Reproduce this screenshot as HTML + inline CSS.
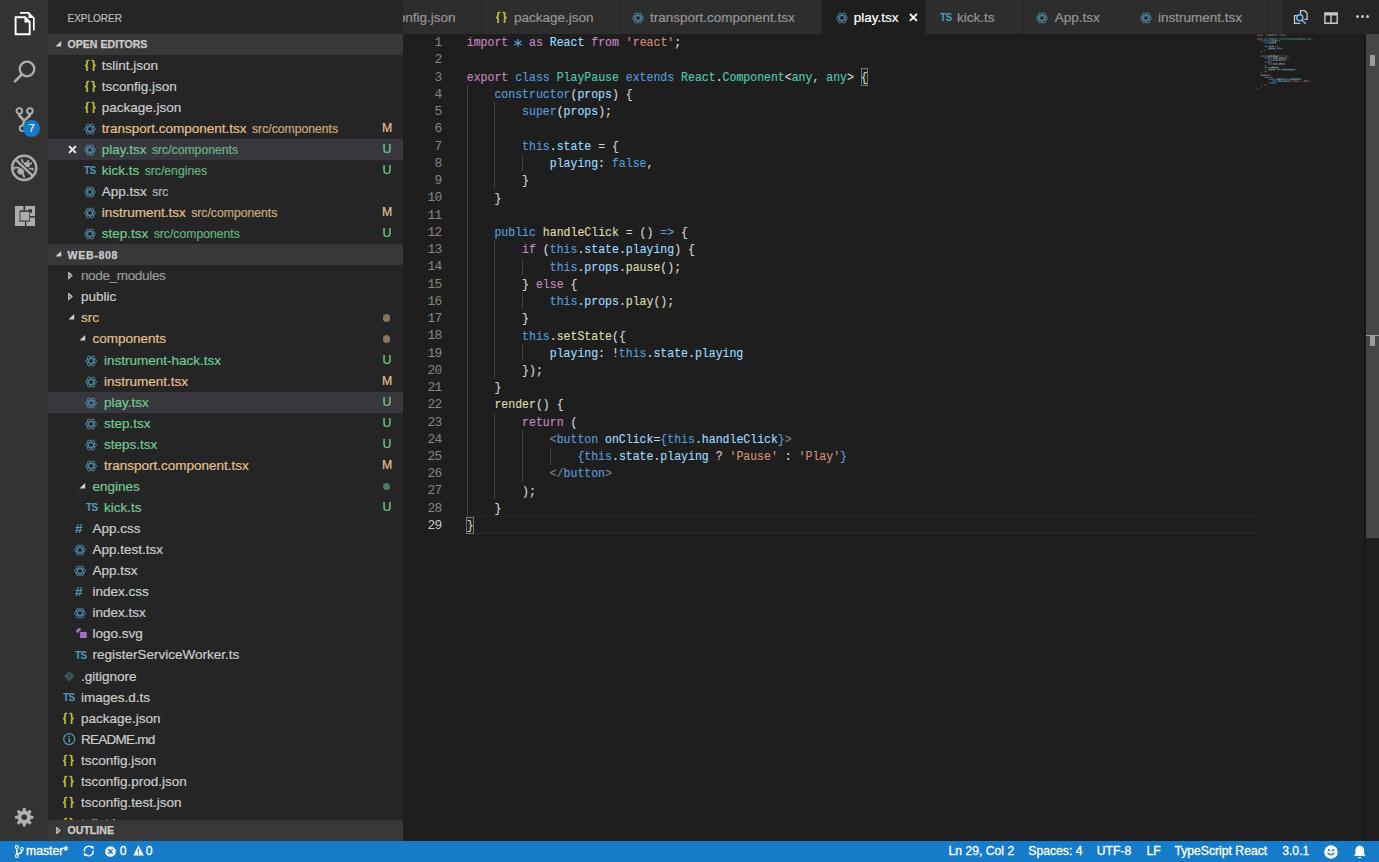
<!DOCTYPE html><html><head><meta charset="utf-8"><style>
*{box-sizing:border-box;margin:0;padding:0}
html,body{width:1379px;height:862px;overflow:hidden;background:#1e1e1e}
body{position:relative;font-family:"Liberation Sans",sans-serif}
.a{position:absolute}
.ui{font-family:"Liberation Sans",sans-serif;white-space:pre}
.code{position:absolute;font-family:"Liberation Mono",monospace;font-size:11.53px;white-space:pre;line-height:17.24px;height:17.24px;color:#D4D4D4}
.code span{-webkit-text-stroke:0.15px currentColor}.mm span{-webkit-text-stroke:1.2px currentColor}.k{color:#C586C0}.b{color:#569CD6}.v{color:#9CDCFE}.s{color:#CE9178}.t{color:#4EC9B0}.f{color:#DCDCAA}.g{color:#808080}
.row{position:absolute;left:48px;width:355px;height:21.07px;overflow:hidden}
.lbl{position:absolute;top:0;font-size:13.5px;line-height:21.07px;white-space:pre;-webkit-text-stroke:0.2px currentColor}
.desc{font-size:12.2px;opacity:.85;margin-left:5.5px}
.bdg{position:absolute;left:335.5px;top:0;width:10px;text-align:center;font-size:11.5px;line-height:21.07px;font-weight:bold}
.hdr{position:absolute;left:48px;width:355px;background:#383838}
.hdrt{position:absolute;left:19.7px;font-size:10.5px;font-weight:bold;color:#cccccc;white-space:pre}
</style></head><body>
<div class="a" style="left:0;top:0;width:48px;height:841px;background:#333333"></div>
<div class="a" style="left:48px;top:0;width:355px;height:841px;background:#252526"></div>
<div class="a ui" style="left:67.5px;top:12.8px;font-size:10px;line-height:12px;color:#bbbbbb;-webkit-text-stroke:0.2px #bbbbbb">EXPLORER</div>
<div class="hdr" style="top:33.50px;height:21.07px"></div>
<svg class="a" style="left:55.20px;top:40.70px" width="7" height="6" viewBox="0 0 7 6"><path d="M6.2 0 L6.2 5.6 L0.4 5.6 Z" fill="#d0d0d0"/></svg>
<div class="a ui" style="left:67.5px;top:37.90px;font-size:10.6px;line-height:12px;font-weight:bold;color:#cccccc;-webkit-text-stroke:0.25px #cccccc;letter-spacing:0px">OPEN EDITORS</div>
<svg class="a" style="left:84.50px;top:58.92px" width="12" height="12" viewBox="0 0 12 12"><text x="0" y="9.6" font-family="Liberation Sans" font-size="12" fill="#CBCB41" stroke="#CBCB41" stroke-width="0.45">{</text><text x="6.6" y="9.6" font-family="Liberation Sans" font-size="12" fill="#CBCB41" stroke="#CBCB41" stroke-width="0.45">}</text></svg>
<div class="a lbl" style="left:101.7px;top:54.59px;color:#cccccc">tslint.json</div>
<svg class="a" style="left:84.50px;top:79.99px" width="12" height="12" viewBox="0 0 12 12"><text x="0" y="9.6" font-family="Liberation Sans" font-size="12" fill="#CBCB41" stroke="#CBCB41" stroke-width="0.45">{</text><text x="6.6" y="9.6" font-family="Liberation Sans" font-size="12" fill="#CBCB41" stroke="#CBCB41" stroke-width="0.45">}</text></svg>
<div class="a lbl" style="left:101.7px;top:75.65px;color:#cccccc">tsconfig.json</div>
<svg class="a" style="left:84.50px;top:101.06px" width="12" height="12" viewBox="0 0 12 12"><text x="0" y="9.6" font-family="Liberation Sans" font-size="12" fill="#CBCB41" stroke="#CBCB41" stroke-width="0.45">{</text><text x="6.6" y="9.6" font-family="Liberation Sans" font-size="12" fill="#CBCB41" stroke="#CBCB41" stroke-width="0.45">}</text></svg>
<div class="a lbl" style="left:101.7px;top:96.72px;color:#cccccc">package.json</div>
<svg class="a" style="left:83.90px;top:122.82px" width="12" height="12" viewBox="0 0 12 12"><g fill="none" stroke="#4f95b5" stroke-width="0.85" transform="translate(6.0,6.0)"><ellipse rx="5.5" ry="2.4"/><ellipse rx="5.5" ry="2.4" transform="rotate(60)"/><ellipse rx="5.5" ry="2.4" transform="rotate(120)"/></g></svg>
<div class="a lbl" style="left:101.7px;top:117.79px;color:#E2C08D">transport.component.tsx<span class="desc">src/components</span></div>
<div class="a ui" style="left:381.5px;top:117.79px;width:11px;text-align:center;font-size:12.3px;line-height:21.07px;font-weight:normal;-webkit-text-stroke:0.2px #E2C08D;color:#E2C08D">M</div>
<div class="a" style="left:48px;top:138.86px;width:355px;height:21.07px;background:#37373d"></div>
<svg class="a" style="left:68.1px;top:145.16px" width="9" height="9" viewBox="0 0 9 9"><path d="M1.1 1.1 L7.9 7.9 M7.9 1.1 L1.1 7.9" stroke="#f0f0f0" stroke-width="2.0"/></svg>
<svg class="a" style="left:83.90px;top:143.89px" width="12" height="12" viewBox="0 0 12 12"><g fill="none" stroke="#4f95b5" stroke-width="0.85" transform="translate(6.0,6.0)"><ellipse rx="5.5" ry="2.4"/><ellipse rx="5.5" ry="2.4" transform="rotate(60)"/><ellipse rx="5.5" ry="2.4" transform="rotate(120)"/></g></svg>
<div class="a lbl" style="left:101.7px;top:138.86px;color:#73C991">play.tsx<span class="desc">src/components</span></div>
<div class="a ui" style="left:381.5px;top:138.86px;width:11px;text-align:center;font-size:12.3px;line-height:21.07px;font-weight:normal;-webkit-text-stroke:0.2px #73C991;color:#73C991">U</div>
<svg class="a" style="left:84.40px;top:165.26px" width="14" height="12" viewBox="0 0 14 12"><text x="0" y="8.6" font-family="Liberation Sans" font-weight="bold" font-size="10" letter-spacing="-0.7" fill="#519ABA">TS</text></svg>
<div class="a lbl" style="left:101.7px;top:159.93px;color:#73C991">kick.ts<span class="desc">src/engines</span></div>
<div class="a ui" style="left:381.5px;top:159.93px;width:11px;text-align:center;font-size:12.3px;line-height:21.07px;font-weight:normal;-webkit-text-stroke:0.2px #73C991;color:#73C991">U</div>
<svg class="a" style="left:83.90px;top:186.03px" width="12" height="12" viewBox="0 0 12 12"><g fill="none" stroke="#4f95b5" stroke-width="0.85" transform="translate(6.0,6.0)"><ellipse rx="5.5" ry="2.4"/><ellipse rx="5.5" ry="2.4" transform="rotate(60)"/><ellipse rx="5.5" ry="2.4" transform="rotate(120)"/></g></svg>
<div class="a lbl" style="left:101.7px;top:180.99px;color:#cccccc">App.tsx<span class="desc">src</span></div>
<svg class="a" style="left:83.90px;top:207.09px" width="12" height="12" viewBox="0 0 12 12"><g fill="none" stroke="#4f95b5" stroke-width="0.85" transform="translate(6.0,6.0)"><ellipse rx="5.5" ry="2.4"/><ellipse rx="5.5" ry="2.4" transform="rotate(60)"/><ellipse rx="5.5" ry="2.4" transform="rotate(120)"/></g></svg>
<div class="a lbl" style="left:101.7px;top:202.06px;color:#E2C08D">instrument.tsx<span class="desc">src/components</span></div>
<div class="a ui" style="left:381.5px;top:202.06px;width:11px;text-align:center;font-size:12.3px;line-height:21.07px;font-weight:normal;-webkit-text-stroke:0.2px #E2C08D;color:#E2C08D">M</div>
<svg class="a" style="left:83.90px;top:228.16px" width="12" height="12" viewBox="0 0 12 12"><g fill="none" stroke="#4f95b5" stroke-width="0.85" transform="translate(6.0,6.0)"><ellipse rx="5.5" ry="2.4"/><ellipse rx="5.5" ry="2.4" transform="rotate(60)"/><ellipse rx="5.5" ry="2.4" transform="rotate(120)"/></g></svg>
<div class="a lbl" style="left:101.7px;top:223.13px;color:#73C991">step.tsx<span class="desc">src/components</span></div>
<div class="a ui" style="left:381.5px;top:223.13px;width:11px;text-align:center;font-size:12.3px;line-height:21.07px;font-weight:normal;-webkit-text-stroke:0.2px #73C991;color:#73C991">U</div>
<div class="hdr" style="top:244.20px;height:21.07px"></div>
<svg class="a" style="left:55.20px;top:251.40px" width="7" height="6" viewBox="0 0 7 6"><path d="M6.2 0 L6.2 5.6 L0.4 5.6 Z" fill="#d0d0d0"/></svg>
<div class="a ui" style="left:67.5px;top:248.60px;font-size:10.6px;line-height:12px;font-weight:bold;color:#cccccc;-webkit-text-stroke:0.25px #cccccc;letter-spacing:0.68px">WEB-808</div>
<svg class="a" style="left:68.00px;top:272.26px" width="6" height="7.5" viewBox="0 0 6 7.5"><path d="M0.8 0.8 L3.9 3.6 L0.8 6.4 Z" fill="none" stroke="#c8c8c8" stroke-width="1.3"/></svg>
<div class="a lbl" style="left:80.9px;top:265.26px;color:#9a9a9a"><span style="letter-spacing:-0.33px">node_modules</span></div>
<svg class="a" style="left:68.00px;top:293.33px" width="6" height="7.5" viewBox="0 0 6 7.5"><path d="M0.8 0.8 L3.9 3.6 L0.8 6.4 Z" fill="none" stroke="#c8c8c8" stroke-width="1.3"/></svg>
<div class="a lbl" style="left:80.9px;top:286.33px;color:#cccccc">public</div>
<svg class="a" style="left:67.60px;top:314.00px" width="7" height="6" viewBox="0 0 7 6"><path d="M6.2 0 L6.2 5.6 L0.4 5.6 Z" fill="#d0d0d0"/></svg>
<div class="a lbl" style="left:80.9px;top:307.40px;color:#E2C08D">src</div>
<div class="a" style="left:382.7px;top:314.24px;width:7.4px;height:7.4px;border-radius:50%;background:#E2C08D;opacity:.52"></div>
<svg class="a" style="left:79.10px;top:335.07px" width="7" height="6" viewBox="0 0 7 6"><path d="M6.2 0 L6.2 5.6 L0.4 5.6 Z" fill="#d0d0d0"/></svg>
<div class="a lbl" style="left:92.4px;top:328.47px;color:#E2C08D">components</div>
<div class="a" style="left:382.7px;top:335.30px;width:7.4px;height:7.4px;border-radius:50%;background:#E2C08D;opacity:.52"></div>
<svg class="a" style="left:85.10px;top:354.57px" width="12" height="12" viewBox="0 0 12 12"><g fill="none" stroke="#4f95b5" stroke-width="0.85" transform="translate(6.0,6.0)"><ellipse rx="5.5" ry="2.4"/><ellipse rx="5.5" ry="2.4" transform="rotate(60)"/><ellipse rx="5.5" ry="2.4" transform="rotate(120)"/></g></svg>
<div class="a lbl" style="left:103.9px;top:349.54px;color:#73C991">instrument-hack.tsx</div>
<div class="a ui" style="left:381.5px;top:349.54px;width:11px;text-align:center;font-size:12.3px;line-height:21.07px;font-weight:normal;-webkit-text-stroke:0.2px #73C991;color:#73C991">U</div>
<svg class="a" style="left:85.10px;top:375.64px" width="12" height="12" viewBox="0 0 12 12"><g fill="none" stroke="#4f95b5" stroke-width="0.85" transform="translate(6.0,6.0)"><ellipse rx="5.5" ry="2.4"/><ellipse rx="5.5" ry="2.4" transform="rotate(60)"/><ellipse rx="5.5" ry="2.4" transform="rotate(120)"/></g></svg>
<div class="a lbl" style="left:103.9px;top:370.61px;color:#E2C08D">instrument.tsx</div>
<div class="a ui" style="left:381.5px;top:370.61px;width:11px;text-align:center;font-size:12.3px;line-height:21.07px;font-weight:normal;-webkit-text-stroke:0.2px #E2C08D;color:#E2C08D">M</div>
<div class="a" style="left:48px;top:391.67px;width:355px;height:21.07px;background:#37373d"></div>
<svg class="a" style="left:85.10px;top:396.71px" width="12" height="12" viewBox="0 0 12 12"><g fill="none" stroke="#4f95b5" stroke-width="0.85" transform="translate(6.0,6.0)"><ellipse rx="5.5" ry="2.4"/><ellipse rx="5.5" ry="2.4" transform="rotate(60)"/><ellipse rx="5.5" ry="2.4" transform="rotate(120)"/></g></svg>
<div class="a lbl" style="left:103.9px;top:391.67px;color:#73C991">play.tsx</div>
<div class="a ui" style="left:381.5px;top:391.67px;width:11px;text-align:center;font-size:12.3px;line-height:21.07px;font-weight:normal;-webkit-text-stroke:0.2px #73C991;color:#73C991">U</div>
<svg class="a" style="left:85.10px;top:417.77px" width="12" height="12" viewBox="0 0 12 12"><g fill="none" stroke="#4f95b5" stroke-width="0.85" transform="translate(6.0,6.0)"><ellipse rx="5.5" ry="2.4"/><ellipse rx="5.5" ry="2.4" transform="rotate(60)"/><ellipse rx="5.5" ry="2.4" transform="rotate(120)"/></g></svg>
<div class="a lbl" style="left:103.9px;top:412.74px;color:#73C991">step.tsx</div>
<div class="a ui" style="left:381.5px;top:412.74px;width:11px;text-align:center;font-size:12.3px;line-height:21.07px;font-weight:normal;-webkit-text-stroke:0.2px #73C991;color:#73C991">U</div>
<svg class="a" style="left:85.10px;top:438.84px" width="12" height="12" viewBox="0 0 12 12"><g fill="none" stroke="#4f95b5" stroke-width="0.85" transform="translate(6.0,6.0)"><ellipse rx="5.5" ry="2.4"/><ellipse rx="5.5" ry="2.4" transform="rotate(60)"/><ellipse rx="5.5" ry="2.4" transform="rotate(120)"/></g></svg>
<div class="a lbl" style="left:103.9px;top:433.81px;color:#73C991">steps.tsx</div>
<div class="a ui" style="left:381.5px;top:433.81px;width:11px;text-align:center;font-size:12.3px;line-height:21.07px;font-weight:normal;-webkit-text-stroke:0.2px #73C991;color:#73C991">U</div>
<svg class="a" style="left:85.10px;top:459.91px" width="12" height="12" viewBox="0 0 12 12"><g fill="none" stroke="#4f95b5" stroke-width="0.85" transform="translate(6.0,6.0)"><ellipse rx="5.5" ry="2.4"/><ellipse rx="5.5" ry="2.4" transform="rotate(60)"/><ellipse rx="5.5" ry="2.4" transform="rotate(120)"/></g></svg>
<div class="a lbl" style="left:103.9px;top:454.88px;color:#E2C08D">transport.component.tsx</div>
<div class="a ui" style="left:381.5px;top:454.88px;width:11px;text-align:center;font-size:12.3px;line-height:21.07px;font-weight:normal;-webkit-text-stroke:0.2px #E2C08D;color:#E2C08D">M</div>
<svg class="a" style="left:79.10px;top:482.55px" width="7" height="6" viewBox="0 0 7 6"><path d="M6.2 0 L6.2 5.6 L0.4 5.6 Z" fill="#d0d0d0"/></svg>
<div class="a lbl" style="left:92.4px;top:475.94px;color:#73C991">engines</div>
<div class="a" style="left:382.7px;top:482.78px;width:7.4px;height:7.4px;border-radius:50%;background:#73C991;opacity:.52"></div>
<svg class="a" style="left:86.10px;top:502.35px" width="14" height="12" viewBox="0 0 14 12"><text x="0" y="8.6" font-family="Liberation Sans" font-weight="bold" font-size="10" letter-spacing="-0.7" fill="#519ABA">TS</text></svg>
<div class="a lbl" style="left:103.9px;top:497.01px;color:#73C991">kick.ts</div>
<div class="a ui" style="left:381.5px;top:497.01px;width:11px;text-align:center;font-size:12.3px;line-height:21.07px;font-weight:normal;-webkit-text-stroke:0.2px #73C991;color:#73C991">U</div>
<svg class="a" style="left:75.30px;top:523.22px" width="10" height="12" viewBox="0 0 10 12"><text x="0" y="10.4" font-family="Liberation Sans" font-weight="bold" font-size="13.6" fill="#519ABA">#</text></svg>
<div class="a lbl" style="left:92.4px;top:518.08px;color:#cccccc">App.css</div>
<svg class="a" style="left:73.90px;top:544.18px" width="12" height="12" viewBox="0 0 12 12"><g fill="none" stroke="#4f95b5" stroke-width="0.85" transform="translate(6.0,6.0)"><ellipse rx="5.5" ry="2.4"/><ellipse rx="5.5" ry="2.4" transform="rotate(60)"/><ellipse rx="5.5" ry="2.4" transform="rotate(120)"/></g></svg>
<div class="a lbl" style="left:92.4px;top:539.15px;color:#cccccc">App.test.tsx</div>
<svg class="a" style="left:73.90px;top:565.25px" width="12" height="12" viewBox="0 0 12 12"><g fill="none" stroke="#4f95b5" stroke-width="0.85" transform="translate(6.0,6.0)"><ellipse rx="5.5" ry="2.4"/><ellipse rx="5.5" ry="2.4" transform="rotate(60)"/><ellipse rx="5.5" ry="2.4" transform="rotate(120)"/></g></svg>
<div class="a lbl" style="left:92.4px;top:560.22px;color:#cccccc">App.tsx</div>
<svg class="a" style="left:75.30px;top:586.42px" width="10" height="12" viewBox="0 0 10 12"><text x="0" y="10.4" font-family="Liberation Sans" font-weight="bold" font-size="13.6" fill="#519ABA">#</text></svg>
<div class="a lbl" style="left:92.4px;top:581.29px;color:#cccccc">index.css</div>
<svg class="a" style="left:73.90px;top:607.39px" width="12" height="12" viewBox="0 0 12 12"><g fill="none" stroke="#4f95b5" stroke-width="0.85" transform="translate(6.0,6.0)"><ellipse rx="5.5" ry="2.4"/><ellipse rx="5.5" ry="2.4" transform="rotate(60)"/><ellipse rx="5.5" ry="2.4" transform="rotate(120)"/></g></svg>
<div class="a lbl" style="left:92.4px;top:602.35px;color:#cccccc">index.tsx</div>
<svg class="a" style="left:74.60px;top:627.25px" width="13" height="13" viewBox="0 0 13 13"><path d="M1 5.6 A4.6 4.6 0 0 1 5.6 1 V5.6 Z" fill="#A074C4"/><rect x="4.6" y="4.4" width="7.6" height="7.2" fill="#A074C4" stroke="#252526" stroke-width="1"/></svg>
<div class="a lbl" style="left:92.4px;top:623.42px;color:#cccccc">logo.svg</div>
<svg class="a" style="left:74.60px;top:649.82px" width="14" height="12" viewBox="0 0 14 12"><text x="0" y="8.6" font-family="Liberation Sans" font-weight="bold" font-size="10" letter-spacing="-0.7" fill="#519ABA">TS</text></svg>
<div class="a lbl" style="left:92.4px;top:644.49px;color:#cccccc">registerServiceWorker.ts</div>
<svg class="a" style="left:63.50px;top:671.09px" width="11" height="11" viewBox="0 0 11 11"><path d="M5.2 0 L10.4 5.2 L5.2 10.4 L0 5.2 Z" fill="#41535B"/><path d="M4.2 3 L6.4 5.2 L4.2 7.4" stroke="#252526" stroke-width="1" fill="none"/><path d="M5.2 2.2 V8.2" stroke="#2f3d43" stroke-width="0.8"/></svg>
<div class="a lbl" style="left:80.9px;top:665.56px;color:#cccccc">.gitignore</div>
<svg class="a" style="left:63.10px;top:691.96px" width="14" height="12" viewBox="0 0 14 12"><text x="0" y="8.6" font-family="Liberation Sans" font-weight="bold" font-size="10" letter-spacing="-0.7" fill="#519ABA">TS</text></svg>
<div class="a lbl" style="left:80.9px;top:686.62px;color:#cccccc">images.d.ts</div>
<svg class="a" style="left:63.00px;top:712.03px" width="12" height="12" viewBox="0 0 12 12"><text x="0" y="9.6" font-family="Liberation Sans" font-size="12" fill="#CBCB41" stroke="#CBCB41" stroke-width="0.45">{</text><text x="6.6" y="9.6" font-family="Liberation Sans" font-size="12" fill="#CBCB41" stroke="#CBCB41" stroke-width="0.45">}</text></svg>
<div class="a lbl" style="left:80.9px;top:707.69px;color:#cccccc">package.json</div>
<svg class="a" style="left:62.70px;top:733.09px" width="13" height="13" viewBox="0 0 13 13"><circle cx="6.2" cy="6.1" r="5.5" fill="none" stroke="#519ABA" stroke-width="1.2"/><rect x="5.5" y="5" width="1.4" height="4.3" fill="#519ABA"/><rect x="5.5" y="2.8" width="1.4" height="1.3" fill="#519ABA"/></svg>
<div class="a lbl" style="left:80.9px;top:728.76px;color:#cccccc"><span style="letter-spacing:-0.75px">README.md</span></div>
<svg class="a" style="left:63.00px;top:754.16px" width="12" height="12" viewBox="0 0 12 12"><text x="0" y="9.6" font-family="Liberation Sans" font-size="12" fill="#CBCB41" stroke="#CBCB41" stroke-width="0.45">{</text><text x="6.6" y="9.6" font-family="Liberation Sans" font-size="12" fill="#CBCB41" stroke="#CBCB41" stroke-width="0.45">}</text></svg>
<div class="a lbl" style="left:80.9px;top:749.83px;color:#cccccc">tsconfig.json</div>
<svg class="a" style="left:63.00px;top:775.23px" width="12" height="12" viewBox="0 0 12 12"><text x="0" y="9.6" font-family="Liberation Sans" font-size="12" fill="#CBCB41" stroke="#CBCB41" stroke-width="0.45">{</text><text x="6.6" y="9.6" font-family="Liberation Sans" font-size="12" fill="#CBCB41" stroke="#CBCB41" stroke-width="0.45">}</text></svg>
<div class="a lbl" style="left:80.9px;top:770.90px;color:#cccccc">tsconfig.prod.json</div>
<svg class="a" style="left:63.00px;top:796.30px" width="12" height="12" viewBox="0 0 12 12"><text x="0" y="9.6" font-family="Liberation Sans" font-size="12" fill="#CBCB41" stroke="#CBCB41" stroke-width="0.45">{</text><text x="6.6" y="9.6" font-family="Liberation Sans" font-size="12" fill="#CBCB41" stroke="#CBCB41" stroke-width="0.45">}</text></svg>
<div class="a lbl" style="left:80.9px;top:791.97px;color:#cccccc">tsconfig.test.json</div>
<svg class="a" style="left:63.00px;top:817.37px" width="12" height="12" viewBox="0 0 12 12"><text x="0" y="9.6" font-family="Liberation Sans" font-size="12" fill="#CBCB41" stroke="#CBCB41" stroke-width="0.45">{</text><text x="6.6" y="9.6" font-family="Liberation Sans" font-size="12" fill="#CBCB41" stroke="#CBCB41" stroke-width="0.45">}</text></svg>
<div class="a lbl" style="left:80.9px;top:813.03px;color:#cccccc">tslint.json</div>
<div class="hdr" style="top:819.60px;height:21.07px"></div>
<svg class="a" style="left:55.50px;top:826.60px" width="6" height="7.5" viewBox="0 0 6 7.5"><path d="M0.8 0.8 L3.9 3.6 L0.8 6.4 Z" fill="none" stroke="#c8c8c8" stroke-width="1.3"/></svg>
<div class="a ui" style="left:67.5px;top:824.00px;font-size:10.6px;line-height:12px;font-weight:bold;color:#cccccc;-webkit-text-stroke:0.25px #cccccc;letter-spacing:0px">OUTLINE</div>
<div class="a" style="left:403px;top:0;width:976px;height:841px;background:#1e1e1e"></div>
<div class="a" style="left:403px;top:0;width:976px;height:33.5px;background:#252526"></div>
<div class="a" style="left:403px;top:0;width:880.5px;height:33.5px;overflow:hidden">
<div class="a" style="left:0.00px;top:0;width:78.15px;height:33.5px;background:#2d2d2d"></div>
<div class="a ui" style="left:-5.20px;top:9.2px;font-size:13.5px;line-height:17px;color:#969696;-webkit-text-stroke:0.2px #969696">onfig.json</div>
<div class="a" style="left:79.10px;top:0;width:136.65px;height:33.5px;background:#2d2d2d"></div>
<svg class="a" style="left:93.30px;top:10.80px" width="12" height="12" viewBox="0 0 12 12"><text x="0" y="9.6" font-family="Liberation Sans" font-size="12" fill="#CBCB41" stroke="#CBCB41" stroke-width="0.45">{</text><text x="6.6" y="9.6" font-family="Liberation Sans" font-size="12" fill="#CBCB41" stroke="#CBCB41" stroke-width="0.45">}</text></svg>
<div class="a ui" style="left:111.00px;top:9.2px;font-size:13.5px;line-height:17px;color:#969696;-webkit-text-stroke:0.2px #969696">package.json</div>
<div class="a" style="left:216.70px;top:0;width:201.25px;height:33.5px;background:#2d2d2d"></div>
<svg class="a" style="left:228.60px;top:11.50px" width="12" height="12" viewBox="0 0 12 12"><g fill="none" stroke="#4f95b5" stroke-width="0.85" transform="translate(6.0,6.0)"><ellipse rx="5.5" ry="2.4"/><ellipse rx="5.5" ry="2.4" transform="rotate(60)"/><ellipse rx="5.5" ry="2.4" transform="rotate(120)"/></g></svg>
<div class="a ui" style="left:246.90px;top:9.2px;font-size:13.5px;line-height:17px;color:#969696;-webkit-text-stroke:0.2px #969696">transport.component.tsx</div>
<div class="a" style="left:418.90px;top:0;width:102.65px;height:33.5px;background:#1e1e1e"></div>
<svg class="a" style="left:432.50px;top:11.50px" width="12" height="12" viewBox="0 0 12 12"><g fill="none" stroke="#4f95b5" stroke-width="0.85" transform="translate(6.0,6.0)"><ellipse rx="5.5" ry="2.4"/><ellipse rx="5.5" ry="2.4" transform="rotate(60)"/><ellipse rx="5.5" ry="2.4" transform="rotate(120)"/></g></svg>
<div class="a ui" style="left:450.80px;top:9.2px;font-size:13.5px;line-height:17px;color:#ffffff;-webkit-text-stroke:0.2px #ffffff">play.tsx</div>
<svg class="a" style="left:506.4px;top:13.3px" width="8.8" height="8.8" viewBox="0 0 8.8 8.8"><path d="M0.9 0.9 L7.9 7.9 M7.9 0.9 L0.9 7.9" stroke="#ffffff" stroke-width="1.9"/></svg>
<div class="a" style="left:522.50px;top:0;width:97.45px;height:33.5px;background:#2d2d2d"></div>
<svg class="a" style="left:537.20px;top:11.80px" width="14" height="12" viewBox="0 0 14 12"><text x="0" y="8.6" font-family="Liberation Sans" font-weight="bold" font-size="10" letter-spacing="-0.7" fill="#519ABA">TS</text></svg>
<div class="a ui" style="left:554.00px;top:9.2px;font-size:13.5px;line-height:17px;color:#969696;-webkit-text-stroke:0.2px #969696">kick.ts</div>
<div class="a" style="left:620.90px;top:0;width:101.55px;height:33.5px;background:#2d2d2d"></div>
<svg class="a" style="left:632.60px;top:11.50px" width="12" height="12" viewBox="0 0 12 12"><g fill="none" stroke="#4f95b5" stroke-width="0.85" transform="translate(6.0,6.0)"><ellipse rx="5.5" ry="2.4"/><ellipse rx="5.5" ry="2.4" transform="rotate(60)"/><ellipse rx="5.5" ry="2.4" transform="rotate(120)"/></g></svg>
<div class="a ui" style="left:651.80px;top:9.2px;font-size:13.5px;line-height:17px;color:#969696;-webkit-text-stroke:0.2px #969696">App.tsx</div>
<div class="a" style="left:723.40px;top:0;width:141.85px;height:33.5px;background:#2d2d2d"></div>
<svg class="a" style="left:736.50px;top:11.50px" width="12" height="12" viewBox="0 0 12 12"><g fill="none" stroke="#4f95b5" stroke-width="0.85" transform="translate(6.0,6.0)"><ellipse rx="5.5" ry="2.4"/><ellipse rx="5.5" ry="2.4" transform="rotate(60)"/><ellipse rx="5.5" ry="2.4" transform="rotate(120)"/></g></svg>
<div class="a ui" style="left:755.00px;top:9.2px;font-size:13.5px;line-height:17px;color:#969696;-webkit-text-stroke:0.2px #969696">instrument.tsx</div>
<div class="a" style="left:866.20px;top:0;width:13.35px;height:33.5px;background:#2d2d2d"></div>
</div>
<svg class="a" style="left:1288px;top:6px" width="24" height="22" viewBox="0 0 24 22"><g fill="none" stroke="#c5c5c5" stroke-width="1.3"><path d="M12.6 8 V4.7 H16.6 L19.1 7.3 V13.4 H16.5"/><path d="M8.8 9.7 H6.5 V17.3 H12.3"/></g><circle cx="11.8" cy="11.8" r="3.1" fill="none" stroke="#75beff" stroke-width="1.35"/><path d="M14 14 L17.4 17.4" stroke="#75beff" stroke-width="1.4" stroke-linecap="round"/></svg>
<svg class="a" style="left:1324px;top:11.5px" width="14.2" height="12.2" viewBox="0 0 14.2 12.2"><path d="M0.2 0.3 H13.9 V11.9 H0.2 Z M1.6 3.6 V10.5 H6.35 V3.6 Z M7.75 3.6 V10.5 H12.5 V3.6 Z" fill="#c8c8c8" fill-rule="evenodd"/></svg>
<div class="a" style="left:1356.00px;top:15.4px;width:3.1px;height:3.1px;border-radius:50%;background:#c5c5c5"></div>
<div class="a" style="left:1360.80px;top:15.4px;width:3.1px;height:3.1px;border-radius:50%;background:#c5c5c5"></div>
<div class="a" style="left:1365.60px;top:15.4px;width:3.1px;height:3.1px;border-radius:50%;background:#c5c5c5"></div>
<div class="a" style="left:466px;top:515.94px;width:791px;height:17.64px;border:1.5px solid #282828;border-right:none"></div>
<div class="a" style="left:466.80px;top:85.24px;width:1px;height:17.29px;background:#404040"></div>
<div class="a" style="left:466.80px;top:102.48px;width:1px;height:17.29px;background:#404040"></div>
<div class="a" style="left:494.47px;top:102.48px;width:1px;height:17.29px;background:#404040"></div>
<div class="a" style="left:466.80px;top:119.72px;width:1px;height:17.29px;background:#404040"></div>
<div class="a" style="left:494.47px;top:119.72px;width:1px;height:17.29px;background:#404040"></div>
<div class="a" style="left:466.80px;top:136.96px;width:1px;height:17.29px;background:#404040"></div>
<div class="a" style="left:494.47px;top:136.96px;width:1px;height:17.29px;background:#404040"></div>
<div class="a" style="left:466.80px;top:154.20px;width:1px;height:17.29px;background:#404040"></div>
<div class="a" style="left:494.47px;top:154.20px;width:1px;height:17.29px;background:#404040"></div>
<div class="a" style="left:522.14px;top:154.20px;width:1px;height:17.29px;background:#404040"></div>
<div class="a" style="left:466.80px;top:171.44px;width:1px;height:17.29px;background:#404040"></div>
<div class="a" style="left:494.47px;top:171.44px;width:1px;height:17.29px;background:#404040"></div>
<div class="a" style="left:466.80px;top:188.68px;width:1px;height:17.29px;background:#404040"></div>
<div class="a" style="left:466.80px;top:205.92px;width:1px;height:17.29px;background:#404040"></div>
<div class="a" style="left:466.80px;top:223.16px;width:1px;height:17.29px;background:#404040"></div>
<div class="a" style="left:466.80px;top:240.40px;width:1px;height:17.29px;background:#404040"></div>
<div class="a" style="left:494.47px;top:240.40px;width:1px;height:17.29px;background:#404040"></div>
<div class="a" style="left:466.80px;top:257.64px;width:1px;height:17.29px;background:#404040"></div>
<div class="a" style="left:494.47px;top:257.64px;width:1px;height:17.29px;background:#404040"></div>
<div class="a" style="left:522.14px;top:257.64px;width:1px;height:17.29px;background:#404040"></div>
<div class="a" style="left:466.80px;top:274.88px;width:1px;height:17.29px;background:#404040"></div>
<div class="a" style="left:494.47px;top:274.88px;width:1px;height:17.29px;background:#404040"></div>
<div class="a" style="left:466.80px;top:292.12px;width:1px;height:17.29px;background:#404040"></div>
<div class="a" style="left:494.47px;top:292.12px;width:1px;height:17.29px;background:#404040"></div>
<div class="a" style="left:522.14px;top:292.12px;width:1px;height:17.29px;background:#404040"></div>
<div class="a" style="left:466.80px;top:309.36px;width:1px;height:17.29px;background:#404040"></div>
<div class="a" style="left:494.47px;top:309.36px;width:1px;height:17.29px;background:#404040"></div>
<div class="a" style="left:466.80px;top:326.60px;width:1px;height:17.29px;background:#404040"></div>
<div class="a" style="left:494.47px;top:326.60px;width:1px;height:17.29px;background:#404040"></div>
<div class="a" style="left:466.80px;top:343.84px;width:1px;height:17.29px;background:#404040"></div>
<div class="a" style="left:494.47px;top:343.84px;width:1px;height:17.29px;background:#404040"></div>
<div class="a" style="left:522.14px;top:343.84px;width:1px;height:17.29px;background:#404040"></div>
<div class="a" style="left:466.80px;top:361.08px;width:1px;height:17.29px;background:#404040"></div>
<div class="a" style="left:494.47px;top:361.08px;width:1px;height:17.29px;background:#404040"></div>
<div class="a" style="left:466.80px;top:378.32px;width:1px;height:17.29px;background:#404040"></div>
<div class="a" style="left:466.80px;top:395.56px;width:1px;height:17.29px;background:#404040"></div>
<div class="a" style="left:466.80px;top:412.80px;width:1px;height:17.29px;background:#404040"></div>
<div class="a" style="left:494.47px;top:412.80px;width:1px;height:17.29px;background:#404040"></div>
<div class="a" style="left:466.80px;top:430.04px;width:1px;height:17.29px;background:#404040"></div>
<div class="a" style="left:494.47px;top:430.04px;width:1px;height:17.29px;background:#404040"></div>
<div class="a" style="left:522.14px;top:430.04px;width:1px;height:17.29px;background:#404040"></div>
<div class="a" style="left:466.80px;top:447.28px;width:1px;height:17.29px;background:#404040"></div>
<div class="a" style="left:494.47px;top:447.28px;width:1px;height:17.29px;background:#404040"></div>
<div class="a" style="left:522.14px;top:447.28px;width:1px;height:17.29px;background:#404040"></div>
<div class="a" style="left:549.82px;top:447.28px;width:1px;height:17.29px;background:#404040"></div>
<div class="a" style="left:466.80px;top:464.52px;width:1px;height:17.29px;background:#404040"></div>
<div class="a" style="left:494.47px;top:464.52px;width:1px;height:17.29px;background:#404040"></div>
<div class="a" style="left:522.14px;top:464.52px;width:1px;height:17.29px;background:#404040"></div>
<div class="a" style="left:466.80px;top:481.76px;width:1px;height:17.29px;background:#404040"></div>
<div class="a" style="left:494.47px;top:481.76px;width:1px;height:17.29px;background:#404040"></div>
<div class="a" style="left:466.80px;top:499.00px;width:1px;height:17.29px;background:#404040"></div>
<div class="a" style="left:860.73px;top:68.30px;width:7.52px;height:17.74px;border:1px solid #767676;background:rgba(0,100,0,.1)"></div>
<div class="a" style="left:466.40px;top:516.54px;width:7.52px;height:17.74px;border:1px solid #767676;background:rgba(0,100,0,.1)"></div>
<div class="code" style="left:400px;width:41.8px;text-align:right;top:34.22px;color:#858585;font-size:12.9px;letter-spacing:-0.55px">1</div>
<div class="code" style="left:400px;width:41.8px;text-align:right;top:51.46px;color:#858585;font-size:12.9px;letter-spacing:-0.55px">2</div>
<div class="code" style="left:400px;width:41.8px;text-align:right;top:68.70px;color:#858585;font-size:12.9px;letter-spacing:-0.55px">3</div>
<div class="code" style="left:400px;width:41.8px;text-align:right;top:85.94px;color:#858585;font-size:12.9px;letter-spacing:-0.55px">4</div>
<div class="code" style="left:400px;width:41.8px;text-align:right;top:103.18px;color:#858585;font-size:12.9px;letter-spacing:-0.55px">5</div>
<div class="code" style="left:400px;width:41.8px;text-align:right;top:120.42px;color:#858585;font-size:12.9px;letter-spacing:-0.55px">6</div>
<div class="code" style="left:400px;width:41.8px;text-align:right;top:137.66px;color:#858585;font-size:12.9px;letter-spacing:-0.55px">7</div>
<div class="code" style="left:400px;width:41.8px;text-align:right;top:154.90px;color:#858585;font-size:12.9px;letter-spacing:-0.55px">8</div>
<div class="code" style="left:400px;width:41.8px;text-align:right;top:172.14px;color:#858585;font-size:12.9px;letter-spacing:-0.55px">9</div>
<div class="code" style="left:400px;width:41.8px;text-align:right;top:189.38px;color:#858585;font-size:12.9px;letter-spacing:-0.55px">10</div>
<div class="code" style="left:400px;width:41.8px;text-align:right;top:206.62px;color:#858585;font-size:12.9px;letter-spacing:-0.55px">11</div>
<div class="code" style="left:400px;width:41.8px;text-align:right;top:223.86px;color:#858585;font-size:12.9px;letter-spacing:-0.55px">12</div>
<div class="code" style="left:400px;width:41.8px;text-align:right;top:241.10px;color:#858585;font-size:12.9px;letter-spacing:-0.55px">13</div>
<div class="code" style="left:400px;width:41.8px;text-align:right;top:258.34px;color:#858585;font-size:12.9px;letter-spacing:-0.55px">14</div>
<div class="code" style="left:400px;width:41.8px;text-align:right;top:275.58px;color:#858585;font-size:12.9px;letter-spacing:-0.55px">15</div>
<div class="code" style="left:400px;width:41.8px;text-align:right;top:292.82px;color:#858585;font-size:12.9px;letter-spacing:-0.55px">16</div>
<div class="code" style="left:400px;width:41.8px;text-align:right;top:310.06px;color:#858585;font-size:12.9px;letter-spacing:-0.55px">17</div>
<div class="code" style="left:400px;width:41.8px;text-align:right;top:327.30px;color:#858585;font-size:12.9px;letter-spacing:-0.55px">18</div>
<div class="code" style="left:400px;width:41.8px;text-align:right;top:344.54px;color:#858585;font-size:12.9px;letter-spacing:-0.55px">19</div>
<div class="code" style="left:400px;width:41.8px;text-align:right;top:361.78px;color:#858585;font-size:12.9px;letter-spacing:-0.55px">20</div>
<div class="code" style="left:400px;width:41.8px;text-align:right;top:379.02px;color:#858585;font-size:12.9px;letter-spacing:-0.55px">21</div>
<div class="code" style="left:400px;width:41.8px;text-align:right;top:396.26px;color:#858585;font-size:12.9px;letter-spacing:-0.55px">22</div>
<div class="code" style="left:400px;width:41.8px;text-align:right;top:413.50px;color:#858585;font-size:12.9px;letter-spacing:-0.55px">23</div>
<div class="code" style="left:400px;width:41.8px;text-align:right;top:430.74px;color:#858585;font-size:12.9px;letter-spacing:-0.55px">24</div>
<div class="code" style="left:400px;width:41.8px;text-align:right;top:447.98px;color:#858585;font-size:12.9px;letter-spacing:-0.55px">25</div>
<div class="code" style="left:400px;width:41.8px;text-align:right;top:465.22px;color:#858585;font-size:12.9px;letter-spacing:-0.55px">26</div>
<div class="code" style="left:400px;width:41.8px;text-align:right;top:482.46px;color:#858585;font-size:12.9px;letter-spacing:-0.55px">27</div>
<div class="code" style="left:400px;width:41.8px;text-align:right;top:499.70px;color:#858585;font-size:12.9px;letter-spacing:-0.55px">28</div>
<div class="code" style="left:400px;width:41.8px;text-align:right;top:516.94px;color:#c6c6c6;font-size:12.9px;letter-spacing:-0.55px">29</div>
<div class="code" style="left:466.80px;top:34.42px;transform:scaleY(1.1);transform-origin:0 12.6px;-webkit-text-stroke:0.15px currentColor"><span class="k">import</span> <span class="b"> </span> <span class="k">as</span> <span class="v">React</span> <span class="k">from</span> <span class="s">&#x27;react&#x27;</span>;</div>
<div class="code" style="left:466.80px;top:68.90px;transform:scaleY(1.1);transform-origin:0 12.6px;-webkit-text-stroke:0.15px currentColor"><span class="k">export</span> <span class="b">class</span> <span class="t">PlayPause</span> <span class="b">extends</span> <span class="t">React</span>.<span class="t">Component</span>&lt;<span class="t">any</span>, <span class="t">any</span>&gt; {</div>
<div class="code" style="left:466.80px;top:86.14px;transform:scaleY(1.1);transform-origin:0 12.6px;-webkit-text-stroke:0.15px currentColor">    <span class="b">constructor</span>(<span class="v">props</span>) {</div>
<div class="code" style="left:466.80px;top:103.38px;transform:scaleY(1.1);transform-origin:0 12.6px;-webkit-text-stroke:0.15px currentColor">        <span class="b">super</span>(<span class="v">props</span>);</div>
<div class="code" style="left:466.80px;top:137.86px;transform:scaleY(1.1);transform-origin:0 12.6px;-webkit-text-stroke:0.15px currentColor">        <span class="b">this</span>.<span class="v">state</span> = {</div>
<div class="code" style="left:466.80px;top:155.10px;transform:scaleY(1.1);transform-origin:0 12.6px;-webkit-text-stroke:0.15px currentColor">            <span class="v">playing</span>: <span class="b">false</span>,</div>
<div class="code" style="left:466.80px;top:172.34px;transform:scaleY(1.1);transform-origin:0 12.6px;-webkit-text-stroke:0.15px currentColor">        }</div>
<div class="code" style="left:466.80px;top:189.58px;transform:scaleY(1.1);transform-origin:0 12.6px;-webkit-text-stroke:0.15px currentColor">    }</div>
<div class="code" style="left:466.80px;top:224.06px;transform:scaleY(1.1);transform-origin:0 12.6px;-webkit-text-stroke:0.15px currentColor">    <span class="b">public</span> <span class="f">handleClick</span> = () <span class="b">=&gt;</span> {</div>
<div class="code" style="left:466.80px;top:241.30px;transform:scaleY(1.1);transform-origin:0 12.6px;-webkit-text-stroke:0.15px currentColor">        <span class="k">if</span> (<span class="b">this</span>.<span class="v">state</span>.<span class="v">playing</span>) {</div>
<div class="code" style="left:466.80px;top:258.54px;transform:scaleY(1.1);transform-origin:0 12.6px;-webkit-text-stroke:0.15px currentColor">            <span class="b">this</span>.<span class="v">props</span>.<span class="f">pause</span>();</div>
<div class="code" style="left:466.80px;top:275.78px;transform:scaleY(1.1);transform-origin:0 12.6px;-webkit-text-stroke:0.15px currentColor">        } <span class="k">else</span> {</div>
<div class="code" style="left:466.80px;top:293.02px;transform:scaleY(1.1);transform-origin:0 12.6px;-webkit-text-stroke:0.15px currentColor">            <span class="b">this</span>.<span class="v">props</span>.<span class="f">play</span>();</div>
<div class="code" style="left:466.80px;top:310.26px;transform:scaleY(1.1);transform-origin:0 12.6px;-webkit-text-stroke:0.15px currentColor">        }</div>
<div class="code" style="left:466.80px;top:327.50px;transform:scaleY(1.1);transform-origin:0 12.6px;-webkit-text-stroke:0.15px currentColor">        <span class="b">this</span>.<span class="f">setState</span>({</div>
<div class="code" style="left:466.80px;top:344.74px;transform:scaleY(1.1);transform-origin:0 12.6px;-webkit-text-stroke:0.15px currentColor">            <span class="v">playing</span>: !<span class="b">this</span>.<span class="v">state</span>.<span class="v">playing</span></div>
<div class="code" style="left:466.80px;top:361.98px;transform:scaleY(1.1);transform-origin:0 12.6px;-webkit-text-stroke:0.15px currentColor">        });</div>
<div class="code" style="left:466.80px;top:379.22px;transform:scaleY(1.1);transform-origin:0 12.6px;-webkit-text-stroke:0.15px currentColor">    }</div>
<div class="code" style="left:466.80px;top:396.46px;transform:scaleY(1.1);transform-origin:0 12.6px;-webkit-text-stroke:0.15px currentColor">    <span class="f">render</span>() {</div>
<div class="code" style="left:466.80px;top:413.70px;transform:scaleY(1.1);transform-origin:0 12.6px;-webkit-text-stroke:0.15px currentColor">        <span class="k">return</span> (</div>
<div class="code" style="left:466.80px;top:430.94px;transform:scaleY(1.1);transform-origin:0 12.6px;-webkit-text-stroke:0.15px currentColor">            <span class="g">&lt;</span><span class="b">button</span> <span class="v">onClick</span>=<span class="b">{</span><span class="b">this</span>.<span class="v">handleClick</span><span class="b">}</span><span class="g">&gt;</span></div>
<div class="code" style="left:466.80px;top:448.18px;transform:scaleY(1.1);transform-origin:0 12.6px;-webkit-text-stroke:0.15px currentColor">                <span class="b">{</span><span class="b">this</span>.<span class="v">state</span>.<span class="v">playing</span> ? <span class="s">&#x27;Pause&#x27;</span> : <span class="s">&#x27;Play&#x27;</span><span class="b">}</span></div>
<div class="code" style="left:466.80px;top:465.42px;transform:scaleY(1.1);transform-origin:0 12.6px;-webkit-text-stroke:0.15px currentColor">            <span class="g">&lt;/</span><span class="b">button</span><span class="g">&gt;</span></div>
<div class="code" style="left:466.80px;top:482.66px;transform:scaleY(1.1);transform-origin:0 12.6px;-webkit-text-stroke:0.15px currentColor">        );</div>
<div class="code" style="left:466.80px;top:499.90px;transform:scaleY(1.1);transform-origin:0 12.6px;-webkit-text-stroke:0.15px currentColor">    }</div>
<div class="code" style="left:466.80px;top:517.14px;transform:scaleY(1.1);transform-origin:0 12.6px;-webkit-text-stroke:0.15px currentColor">}</div>
<svg class="a" style="left:513.18px;top:37.90px" width="10" height="10" viewBox="-5 -5 10 10"><g stroke="#569CD6" stroke-width="1.15" stroke-linecap="round"><path d="M0 -3.6 V3.6"/><path d="M-3.1 -1.8 L3.1 1.8"/><path d="M-3.1 1.8 L3.1 -1.8"/></g></svg>
<svg class="a" style="left:1257.2px;top:34px" width="70" height="60" viewBox="0 0 70 60"><rect x="0.00" y="0.60" width="0.81" height="1.2" fill="#C586C0" fill-opacity="0.55"/><rect x="0.96" y="0.60" width="0.81" height="1.2" fill="#C586C0" fill-opacity="0.55"/><rect x="1.92" y="0.50" width="0.81" height="1.6" fill="#C586C0" fill-opacity="0.59"/><rect x="2.87" y="0.60" width="0.81" height="1.2" fill="#C586C0" fill-opacity="0.55"/><rect x="3.83" y="0.60" width="0.81" height="1.2" fill="#C586C0" fill-opacity="0.55"/><rect x="4.79" y="0.10" width="0.81" height="1.7" fill="#C586C0" fill-opacity="0.64"/><rect x="8.62" y="0.60" width="0.81" height="1.2" fill="#C586C0" fill-opacity="0.55"/><rect x="9.58" y="0.60" width="0.81" height="1.2" fill="#C586C0" fill-opacity="0.55"/><rect x="11.49" y="0.10" width="0.81" height="1.7" fill="#9CDCFE" fill-opacity="0.64"/><rect x="12.45" y="0.60" width="0.81" height="1.2" fill="#9CDCFE" fill-opacity="0.55"/><rect x="13.41" y="0.60" width="0.81" height="1.2" fill="#9CDCFE" fill-opacity="0.55"/><rect x="14.36" y="0.60" width="0.81" height="1.2" fill="#9CDCFE" fill-opacity="0.55"/><rect x="15.32" y="0.10" width="0.81" height="1.7" fill="#9CDCFE" fill-opacity="0.64"/><rect x="17.24" y="0.10" width="0.81" height="1.7" fill="#C586C0" fill-opacity="0.64"/><rect x="18.19" y="0.60" width="0.81" height="1.2" fill="#C586C0" fill-opacity="0.55"/><rect x="19.15" y="0.60" width="0.81" height="1.2" fill="#C586C0" fill-opacity="0.55"/><rect x="20.11" y="0.60" width="0.81" height="1.2" fill="#C586C0" fill-opacity="0.55"/><rect x="22.02" y="0.90" width="0.81" height="0.9" fill="#CE9178" fill-opacity="0.30"/><rect x="22.98" y="0.60" width="0.81" height="1.2" fill="#CE9178" fill-opacity="0.55"/><rect x="23.94" y="0.60" width="0.81" height="1.2" fill="#CE9178" fill-opacity="0.55"/><rect x="24.90" y="0.60" width="0.81" height="1.2" fill="#CE9178" fill-opacity="0.55"/><rect x="25.86" y="0.60" width="0.81" height="1.2" fill="#CE9178" fill-opacity="0.55"/><rect x="26.81" y="0.10" width="0.81" height="1.7" fill="#CE9178" fill-opacity="0.64"/><rect x="27.77" y="0.90" width="0.81" height="0.9" fill="#CE9178" fill-opacity="0.30"/><rect x="28.73" y="0.90" width="0.81" height="0.9" fill="#D4D4D4" fill-opacity="0.30"/><rect x="0.00" y="4.43" width="0.81" height="1.2" fill="#C586C0" fill-opacity="0.55"/><rect x="0.96" y="4.43" width="0.81" height="1.2" fill="#C586C0" fill-opacity="0.55"/><rect x="1.92" y="4.33" width="0.81" height="1.6" fill="#C586C0" fill-opacity="0.59"/><rect x="2.87" y="4.43" width="0.81" height="1.2" fill="#C586C0" fill-opacity="0.55"/><rect x="3.83" y="4.43" width="0.81" height="1.2" fill="#C586C0" fill-opacity="0.55"/><rect x="4.79" y="3.93" width="0.81" height="1.7" fill="#C586C0" fill-opacity="0.64"/><rect x="6.70" y="4.43" width="0.81" height="1.2" fill="#569CD6" fill-opacity="0.55"/><rect x="7.66" y="3.93" width="0.81" height="1.7" fill="#569CD6" fill-opacity="0.64"/><rect x="8.62" y="4.43" width="0.81" height="1.2" fill="#569CD6" fill-opacity="0.55"/><rect x="9.58" y="4.43" width="0.81" height="1.2" fill="#569CD6" fill-opacity="0.55"/><rect x="10.53" y="4.43" width="0.81" height="1.2" fill="#569CD6" fill-opacity="0.55"/><rect x="12.45" y="3.93" width="0.81" height="1.7" fill="#4EC9B0" fill-opacity="0.64"/><rect x="13.41" y="3.93" width="0.81" height="1.7" fill="#4EC9B0" fill-opacity="0.64"/><rect x="14.36" y="4.43" width="0.81" height="1.2" fill="#4EC9B0" fill-opacity="0.55"/><rect x="15.32" y="4.33" width="0.81" height="1.6" fill="#4EC9B0" fill-opacity="0.59"/><rect x="16.28" y="3.93" width="0.81" height="1.7" fill="#4EC9B0" fill-opacity="0.64"/><rect x="17.24" y="4.43" width="0.81" height="1.2" fill="#4EC9B0" fill-opacity="0.55"/><rect x="18.19" y="4.43" width="0.81" height="1.2" fill="#4EC9B0" fill-opacity="0.55"/><rect x="19.15" y="4.43" width="0.81" height="1.2" fill="#4EC9B0" fill-opacity="0.55"/><rect x="20.11" y="4.43" width="0.81" height="1.2" fill="#4EC9B0" fill-opacity="0.55"/><rect x="22.02" y="4.43" width="0.81" height="1.2" fill="#569CD6" fill-opacity="0.55"/><rect x="22.98" y="4.43" width="0.81" height="1.2" fill="#569CD6" fill-opacity="0.55"/><rect x="23.94" y="3.93" width="0.81" height="1.7" fill="#569CD6" fill-opacity="0.64"/><rect x="24.90" y="4.43" width="0.81" height="1.2" fill="#569CD6" fill-opacity="0.55"/><rect x="25.86" y="4.43" width="0.81" height="1.2" fill="#569CD6" fill-opacity="0.55"/><rect x="26.81" y="3.93" width="0.81" height="1.7" fill="#569CD6" fill-opacity="0.64"/><rect x="27.77" y="4.43" width="0.81" height="1.2" fill="#569CD6" fill-opacity="0.55"/><rect x="29.69" y="3.93" width="0.81" height="1.7" fill="#4EC9B0" fill-opacity="0.64"/><rect x="30.64" y="4.43" width="0.81" height="1.2" fill="#4EC9B0" fill-opacity="0.55"/><rect x="31.60" y="4.43" width="0.81" height="1.2" fill="#4EC9B0" fill-opacity="0.55"/><rect x="32.56" y="4.43" width="0.81" height="1.2" fill="#4EC9B0" fill-opacity="0.55"/><rect x="33.52" y="3.93" width="0.81" height="1.7" fill="#4EC9B0" fill-opacity="0.64"/><rect x="34.47" y="4.73" width="0.81" height="0.9" fill="#D4D4D4" fill-opacity="0.30"/><rect x="35.43" y="3.93" width="0.81" height="1.7" fill="#4EC9B0" fill-opacity="0.64"/><rect x="36.39" y="4.43" width="0.81" height="1.2" fill="#4EC9B0" fill-opacity="0.55"/><rect x="37.35" y="4.43" width="0.81" height="1.2" fill="#4EC9B0" fill-opacity="0.55"/><rect x="38.30" y="4.33" width="0.81" height="1.6" fill="#4EC9B0" fill-opacity="0.59"/><rect x="39.26" y="4.43" width="0.81" height="1.2" fill="#4EC9B0" fill-opacity="0.55"/><rect x="40.22" y="4.43" width="0.81" height="1.2" fill="#4EC9B0" fill-opacity="0.55"/><rect x="41.18" y="4.43" width="0.81" height="1.2" fill="#4EC9B0" fill-opacity="0.55"/><rect x="42.13" y="4.43" width="0.81" height="1.2" fill="#4EC9B0" fill-opacity="0.55"/><rect x="43.09" y="3.93" width="0.81" height="1.7" fill="#4EC9B0" fill-opacity="0.64"/><rect x="44.05" y="4.03" width="0.81" height="1.6" fill="#D4D4D4" fill-opacity="0.42"/><rect x="45.01" y="4.43" width="0.81" height="1.2" fill="#4EC9B0" fill-opacity="0.55"/><rect x="45.96" y="4.43" width="0.81" height="1.2" fill="#4EC9B0" fill-opacity="0.55"/><rect x="46.92" y="4.33" width="0.81" height="1.6" fill="#4EC9B0" fill-opacity="0.59"/><rect x="47.88" y="4.73" width="0.81" height="0.9" fill="#D4D4D4" fill-opacity="0.30"/><rect x="49.80" y="4.43" width="0.81" height="1.2" fill="#4EC9B0" fill-opacity="0.55"/><rect x="50.75" y="4.43" width="0.81" height="1.2" fill="#4EC9B0" fill-opacity="0.55"/><rect x="51.71" y="4.33" width="0.81" height="1.6" fill="#4EC9B0" fill-opacity="0.59"/><rect x="52.67" y="4.03" width="0.81" height="1.6" fill="#D4D4D4" fill-opacity="0.42"/><rect x="54.58" y="4.03" width="0.81" height="1.6" fill="#D4D4D4" fill-opacity="0.42"/><rect x="3.83" y="6.34" width="0.81" height="1.2" fill="#569CD6" fill-opacity="0.55"/><rect x="4.79" y="6.34" width="0.81" height="1.2" fill="#569CD6" fill-opacity="0.55"/><rect x="5.75" y="6.34" width="0.81" height="1.2" fill="#569CD6" fill-opacity="0.55"/><rect x="6.70" y="6.34" width="0.81" height="1.2" fill="#569CD6" fill-opacity="0.55"/><rect x="7.66" y="5.84" width="0.81" height="1.7" fill="#569CD6" fill-opacity="0.64"/><rect x="8.62" y="6.34" width="0.81" height="1.2" fill="#569CD6" fill-opacity="0.55"/><rect x="9.58" y="6.34" width="0.81" height="1.2" fill="#569CD6" fill-opacity="0.55"/><rect x="10.53" y="6.34" width="0.81" height="1.2" fill="#569CD6" fill-opacity="0.55"/><rect x="11.49" y="5.84" width="0.81" height="1.7" fill="#569CD6" fill-opacity="0.64"/><rect x="12.45" y="6.34" width="0.81" height="1.2" fill="#569CD6" fill-opacity="0.55"/><rect x="13.41" y="6.34" width="0.81" height="1.2" fill="#569CD6" fill-opacity="0.55"/><rect x="14.36" y="5.95" width="0.81" height="1.6" fill="#D4D4D4" fill-opacity="0.42"/><rect x="15.32" y="6.25" width="0.81" height="1.6" fill="#9CDCFE" fill-opacity="0.59"/><rect x="16.28" y="6.34" width="0.81" height="1.2" fill="#9CDCFE" fill-opacity="0.55"/><rect x="17.24" y="6.34" width="0.81" height="1.2" fill="#9CDCFE" fill-opacity="0.55"/><rect x="18.19" y="6.25" width="0.81" height="1.6" fill="#9CDCFE" fill-opacity="0.59"/><rect x="19.15" y="6.34" width="0.81" height="1.2" fill="#9CDCFE" fill-opacity="0.55"/><rect x="20.11" y="5.95" width="0.81" height="1.6" fill="#D4D4D4" fill-opacity="0.42"/><rect x="22.02" y="5.95" width="0.81" height="1.6" fill="#D4D4D4" fill-opacity="0.42"/><rect x="7.66" y="8.26" width="0.81" height="1.2" fill="#569CD6" fill-opacity="0.55"/><rect x="8.62" y="8.26" width="0.81" height="1.2" fill="#569CD6" fill-opacity="0.55"/><rect x="9.58" y="8.16" width="0.81" height="1.6" fill="#569CD6" fill-opacity="0.59"/><rect x="10.53" y="8.26" width="0.81" height="1.2" fill="#569CD6" fill-opacity="0.55"/><rect x="11.49" y="8.26" width="0.81" height="1.2" fill="#569CD6" fill-opacity="0.55"/><rect x="12.45" y="7.86" width="0.81" height="1.6" fill="#D4D4D4" fill-opacity="0.42"/><rect x="13.41" y="8.16" width="0.81" height="1.6" fill="#9CDCFE" fill-opacity="0.59"/><rect x="14.36" y="8.26" width="0.81" height="1.2" fill="#9CDCFE" fill-opacity="0.55"/><rect x="15.32" y="8.26" width="0.81" height="1.2" fill="#9CDCFE" fill-opacity="0.55"/><rect x="16.28" y="8.16" width="0.81" height="1.6" fill="#9CDCFE" fill-opacity="0.59"/><rect x="17.24" y="8.26" width="0.81" height="1.2" fill="#9CDCFE" fill-opacity="0.55"/><rect x="18.19" y="7.86" width="0.81" height="1.6" fill="#D4D4D4" fill-opacity="0.42"/><rect x="19.15" y="8.56" width="0.81" height="0.9" fill="#D4D4D4" fill-opacity="0.30"/><rect x="7.66" y="11.59" width="0.81" height="1.7" fill="#569CD6" fill-opacity="0.64"/><rect x="8.62" y="11.59" width="0.81" height="1.7" fill="#569CD6" fill-opacity="0.64"/><rect x="9.58" y="12.09" width="0.81" height="1.2" fill="#569CD6" fill-opacity="0.55"/><rect x="10.53" y="12.09" width="0.81" height="1.2" fill="#569CD6" fill-opacity="0.55"/><rect x="11.49" y="12.39" width="0.81" height="0.9" fill="#D4D4D4" fill-opacity="0.30"/><rect x="12.45" y="12.09" width="0.81" height="1.2" fill="#9CDCFE" fill-opacity="0.55"/><rect x="13.41" y="11.59" width="0.81" height="1.7" fill="#9CDCFE" fill-opacity="0.64"/><rect x="14.36" y="12.09" width="0.81" height="1.2" fill="#9CDCFE" fill-opacity="0.55"/><rect x="15.32" y="11.59" width="0.81" height="1.7" fill="#9CDCFE" fill-opacity="0.64"/><rect x="16.28" y="12.09" width="0.81" height="1.2" fill="#9CDCFE" fill-opacity="0.55"/><rect x="18.19" y="11.69" width="0.81" height="1.6" fill="#D4D4D4" fill-opacity="0.42"/><rect x="20.11" y="11.69" width="0.81" height="1.6" fill="#D4D4D4" fill-opacity="0.42"/><rect x="11.49" y="13.91" width="0.81" height="1.6" fill="#9CDCFE" fill-opacity="0.59"/><rect x="12.45" y="13.51" width="0.81" height="1.7" fill="#9CDCFE" fill-opacity="0.64"/><rect x="13.41" y="14.01" width="0.81" height="1.2" fill="#9CDCFE" fill-opacity="0.55"/><rect x="14.36" y="13.91" width="0.81" height="1.6" fill="#9CDCFE" fill-opacity="0.59"/><rect x="15.32" y="14.01" width="0.81" height="1.2" fill="#9CDCFE" fill-opacity="0.55"/><rect x="16.28" y="14.01" width="0.81" height="1.2" fill="#9CDCFE" fill-opacity="0.55"/><rect x="17.24" y="13.91" width="0.81" height="1.6" fill="#9CDCFE" fill-opacity="0.59"/><rect x="18.19" y="14.31" width="0.81" height="0.9" fill="#D4D4D4" fill-opacity="0.30"/><rect x="20.11" y="13.51" width="0.81" height="1.7" fill="#569CD6" fill-opacity="0.64"/><rect x="21.07" y="14.01" width="0.81" height="1.2" fill="#569CD6" fill-opacity="0.55"/><rect x="22.02" y="13.51" width="0.81" height="1.7" fill="#569CD6" fill-opacity="0.64"/><rect x="22.98" y="14.01" width="0.81" height="1.2" fill="#569CD6" fill-opacity="0.55"/><rect x="23.94" y="14.01" width="0.81" height="1.2" fill="#569CD6" fill-opacity="0.55"/><rect x="24.90" y="14.31" width="0.81" height="0.9" fill="#D4D4D4" fill-opacity="0.30"/><rect x="7.66" y="15.52" width="0.81" height="1.6" fill="#D4D4D4" fill-opacity="0.42"/><rect x="3.83" y="17.43" width="0.81" height="1.6" fill="#D4D4D4" fill-opacity="0.42"/><rect x="3.83" y="21.57" width="0.81" height="1.6" fill="#569CD6" fill-opacity="0.59"/><rect x="4.79" y="21.67" width="0.81" height="1.2" fill="#569CD6" fill-opacity="0.55"/><rect x="5.75" y="21.17" width="0.81" height="1.7" fill="#569CD6" fill-opacity="0.64"/><rect x="6.70" y="21.17" width="0.81" height="1.7" fill="#569CD6" fill-opacity="0.64"/><rect x="7.66" y="21.67" width="0.81" height="1.2" fill="#569CD6" fill-opacity="0.55"/><rect x="8.62" y="21.67" width="0.81" height="1.2" fill="#569CD6" fill-opacity="0.55"/><rect x="10.53" y="21.17" width="0.81" height="1.7" fill="#DCDCAA" fill-opacity="0.64"/><rect x="11.49" y="21.67" width="0.81" height="1.2" fill="#DCDCAA" fill-opacity="0.55"/><rect x="12.45" y="21.67" width="0.81" height="1.2" fill="#DCDCAA" fill-opacity="0.55"/><rect x="13.41" y="21.17" width="0.81" height="1.7" fill="#DCDCAA" fill-opacity="0.64"/><rect x="14.36" y="21.17" width="0.81" height="1.7" fill="#DCDCAA" fill-opacity="0.64"/><rect x="15.32" y="21.67" width="0.81" height="1.2" fill="#DCDCAA" fill-opacity="0.55"/><rect x="16.28" y="21.17" width="0.81" height="1.7" fill="#DCDCAA" fill-opacity="0.64"/><rect x="17.24" y="21.17" width="0.81" height="1.7" fill="#DCDCAA" fill-opacity="0.64"/><rect x="18.19" y="21.67" width="0.81" height="1.2" fill="#DCDCAA" fill-opacity="0.55"/><rect x="19.15" y="21.67" width="0.81" height="1.2" fill="#DCDCAA" fill-opacity="0.55"/><rect x="20.11" y="21.17" width="0.81" height="1.7" fill="#DCDCAA" fill-opacity="0.64"/><rect x="22.02" y="21.27" width="0.81" height="1.6" fill="#D4D4D4" fill-opacity="0.42"/><rect x="23.94" y="21.27" width="0.81" height="1.6" fill="#D4D4D4" fill-opacity="0.42"/><rect x="24.90" y="21.27" width="0.81" height="1.6" fill="#D4D4D4" fill-opacity="0.42"/><rect x="26.81" y="21.27" width="0.81" height="1.6" fill="#569CD6" fill-opacity="0.42"/><rect x="27.77" y="21.27" width="0.81" height="1.6" fill="#569CD6" fill-opacity="0.42"/><rect x="29.69" y="21.27" width="0.81" height="1.6" fill="#D4D4D4" fill-opacity="0.42"/><rect x="7.66" y="23.58" width="0.81" height="1.2" fill="#C586C0" fill-opacity="0.55"/><rect x="8.62" y="23.08" width="0.81" height="1.7" fill="#C586C0" fill-opacity="0.64"/><rect x="10.53" y="23.18" width="0.81" height="1.6" fill="#D4D4D4" fill-opacity="0.42"/><rect x="11.49" y="23.08" width="0.81" height="1.7" fill="#569CD6" fill-opacity="0.64"/><rect x="12.45" y="23.08" width="0.81" height="1.7" fill="#569CD6" fill-opacity="0.64"/><rect x="13.41" y="23.58" width="0.81" height="1.2" fill="#569CD6" fill-opacity="0.55"/><rect x="14.36" y="23.58" width="0.81" height="1.2" fill="#569CD6" fill-opacity="0.55"/><rect x="15.32" y="23.88" width="0.81" height="0.9" fill="#D4D4D4" fill-opacity="0.30"/><rect x="16.28" y="23.58" width="0.81" height="1.2" fill="#9CDCFE" fill-opacity="0.55"/><rect x="17.24" y="23.08" width="0.81" height="1.7" fill="#9CDCFE" fill-opacity="0.64"/><rect x="18.19" y="23.58" width="0.81" height="1.2" fill="#9CDCFE" fill-opacity="0.55"/><rect x="19.15" y="23.08" width="0.81" height="1.7" fill="#9CDCFE" fill-opacity="0.64"/><rect x="20.11" y="23.58" width="0.81" height="1.2" fill="#9CDCFE" fill-opacity="0.55"/><rect x="21.07" y="23.88" width="0.81" height="0.9" fill="#D4D4D4" fill-opacity="0.30"/><rect x="22.02" y="23.48" width="0.81" height="1.6" fill="#9CDCFE" fill-opacity="0.59"/><rect x="22.98" y="23.08" width="0.81" height="1.7" fill="#9CDCFE" fill-opacity="0.64"/><rect x="23.94" y="23.58" width="0.81" height="1.2" fill="#9CDCFE" fill-opacity="0.55"/><rect x="24.90" y="23.48" width="0.81" height="1.6" fill="#9CDCFE" fill-opacity="0.59"/><rect x="25.86" y="23.58" width="0.81" height="1.2" fill="#9CDCFE" fill-opacity="0.55"/><rect x="26.81" y="23.58" width="0.81" height="1.2" fill="#9CDCFE" fill-opacity="0.55"/><rect x="27.77" y="23.48" width="0.81" height="1.6" fill="#9CDCFE" fill-opacity="0.59"/><rect x="28.73" y="23.18" width="0.81" height="1.6" fill="#D4D4D4" fill-opacity="0.42"/><rect x="30.64" y="23.18" width="0.81" height="1.6" fill="#D4D4D4" fill-opacity="0.42"/><rect x="11.49" y="25.00" width="0.81" height="1.7" fill="#569CD6" fill-opacity="0.64"/><rect x="12.45" y="25.00" width="0.81" height="1.7" fill="#569CD6" fill-opacity="0.64"/><rect x="13.41" y="25.50" width="0.81" height="1.2" fill="#569CD6" fill-opacity="0.55"/><rect x="14.36" y="25.50" width="0.81" height="1.2" fill="#569CD6" fill-opacity="0.55"/><rect x="15.32" y="25.79" width="0.81" height="0.9" fill="#D4D4D4" fill-opacity="0.30"/><rect x="16.28" y="25.39" width="0.81" height="1.6" fill="#9CDCFE" fill-opacity="0.59"/><rect x="17.24" y="25.50" width="0.81" height="1.2" fill="#9CDCFE" fill-opacity="0.55"/><rect x="18.19" y="25.50" width="0.81" height="1.2" fill="#9CDCFE" fill-opacity="0.55"/><rect x="19.15" y="25.39" width="0.81" height="1.6" fill="#9CDCFE" fill-opacity="0.59"/><rect x="20.11" y="25.50" width="0.81" height="1.2" fill="#9CDCFE" fill-opacity="0.55"/><rect x="21.07" y="25.79" width="0.81" height="0.9" fill="#D4D4D4" fill-opacity="0.30"/><rect x="22.02" y="25.39" width="0.81" height="1.6" fill="#DCDCAA" fill-opacity="0.59"/><rect x="22.98" y="25.50" width="0.81" height="1.2" fill="#DCDCAA" fill-opacity="0.55"/><rect x="23.94" y="25.50" width="0.81" height="1.2" fill="#DCDCAA" fill-opacity="0.55"/><rect x="24.90" y="25.50" width="0.81" height="1.2" fill="#DCDCAA" fill-opacity="0.55"/><rect x="25.86" y="25.50" width="0.81" height="1.2" fill="#DCDCAA" fill-opacity="0.55"/><rect x="26.81" y="25.09" width="0.81" height="1.6" fill="#D4D4D4" fill-opacity="0.42"/><rect x="27.77" y="25.09" width="0.81" height="1.6" fill="#D4D4D4" fill-opacity="0.42"/><rect x="28.73" y="25.79" width="0.81" height="0.9" fill="#D4D4D4" fill-opacity="0.30"/><rect x="7.66" y="27.01" width="0.81" height="1.6" fill="#D4D4D4" fill-opacity="0.42"/><rect x="9.58" y="27.41" width="0.81" height="1.2" fill="#C586C0" fill-opacity="0.55"/><rect x="10.53" y="26.91" width="0.81" height="1.7" fill="#C586C0" fill-opacity="0.64"/><rect x="11.49" y="27.41" width="0.81" height="1.2" fill="#C586C0" fill-opacity="0.55"/><rect x="12.45" y="27.41" width="0.81" height="1.2" fill="#C586C0" fill-opacity="0.55"/><rect x="14.36" y="27.01" width="0.81" height="1.6" fill="#D4D4D4" fill-opacity="0.42"/><rect x="11.49" y="28.83" width="0.81" height="1.7" fill="#569CD6" fill-opacity="0.64"/><rect x="12.45" y="28.83" width="0.81" height="1.7" fill="#569CD6" fill-opacity="0.64"/><rect x="13.41" y="29.33" width="0.81" height="1.2" fill="#569CD6" fill-opacity="0.55"/><rect x="14.36" y="29.33" width="0.81" height="1.2" fill="#569CD6" fill-opacity="0.55"/><rect x="15.32" y="29.62" width="0.81" height="0.9" fill="#D4D4D4" fill-opacity="0.30"/><rect x="16.28" y="29.23" width="0.81" height="1.6" fill="#9CDCFE" fill-opacity="0.59"/><rect x="17.24" y="29.33" width="0.81" height="1.2" fill="#9CDCFE" fill-opacity="0.55"/><rect x="18.19" y="29.33" width="0.81" height="1.2" fill="#9CDCFE" fill-opacity="0.55"/><rect x="19.15" y="29.23" width="0.81" height="1.6" fill="#9CDCFE" fill-opacity="0.59"/><rect x="20.11" y="29.33" width="0.81" height="1.2" fill="#9CDCFE" fill-opacity="0.55"/><rect x="21.07" y="29.62" width="0.81" height="0.9" fill="#D4D4D4" fill-opacity="0.30"/><rect x="22.02" y="29.23" width="0.81" height="1.6" fill="#DCDCAA" fill-opacity="0.59"/><rect x="22.98" y="28.83" width="0.81" height="1.7" fill="#DCDCAA" fill-opacity="0.64"/><rect x="23.94" y="29.33" width="0.81" height="1.2" fill="#DCDCAA" fill-opacity="0.55"/><rect x="24.90" y="29.23" width="0.81" height="1.6" fill="#DCDCAA" fill-opacity="0.59"/><rect x="25.86" y="28.93" width="0.81" height="1.6" fill="#D4D4D4" fill-opacity="0.42"/><rect x="26.81" y="28.93" width="0.81" height="1.6" fill="#D4D4D4" fill-opacity="0.42"/><rect x="27.77" y="29.62" width="0.81" height="0.9" fill="#D4D4D4" fill-opacity="0.30"/><rect x="7.66" y="30.84" width="0.81" height="1.6" fill="#D4D4D4" fill-opacity="0.42"/><rect x="7.66" y="32.66" width="0.81" height="1.7" fill="#569CD6" fill-opacity="0.64"/><rect x="8.62" y="32.66" width="0.81" height="1.7" fill="#569CD6" fill-opacity="0.64"/><rect x="9.58" y="33.16" width="0.81" height="1.2" fill="#569CD6" fill-opacity="0.55"/><rect x="10.53" y="33.16" width="0.81" height="1.2" fill="#569CD6" fill-opacity="0.55"/><rect x="11.49" y="33.45" width="0.81" height="0.9" fill="#D4D4D4" fill-opacity="0.30"/><rect x="12.45" y="33.16" width="0.81" height="1.2" fill="#DCDCAA" fill-opacity="0.55"/><rect x="13.41" y="33.16" width="0.81" height="1.2" fill="#DCDCAA" fill-opacity="0.55"/><rect x="14.36" y="32.66" width="0.81" height="1.7" fill="#DCDCAA" fill-opacity="0.64"/><rect x="15.32" y="32.66" width="0.81" height="1.7" fill="#DCDCAA" fill-opacity="0.64"/><rect x="16.28" y="32.66" width="0.81" height="1.7" fill="#DCDCAA" fill-opacity="0.64"/><rect x="17.24" y="33.16" width="0.81" height="1.2" fill="#DCDCAA" fill-opacity="0.55"/><rect x="18.19" y="32.66" width="0.81" height="1.7" fill="#DCDCAA" fill-opacity="0.64"/><rect x="19.15" y="33.16" width="0.81" height="1.2" fill="#DCDCAA" fill-opacity="0.55"/><rect x="20.11" y="32.76" width="0.81" height="1.6" fill="#D4D4D4" fill-opacity="0.42"/><rect x="21.07" y="32.76" width="0.81" height="1.6" fill="#D4D4D4" fill-opacity="0.42"/><rect x="11.49" y="34.97" width="0.81" height="1.6" fill="#9CDCFE" fill-opacity="0.59"/><rect x="12.45" y="34.57" width="0.81" height="1.7" fill="#9CDCFE" fill-opacity="0.64"/><rect x="13.41" y="35.07" width="0.81" height="1.2" fill="#9CDCFE" fill-opacity="0.55"/><rect x="14.36" y="34.97" width="0.81" height="1.6" fill="#9CDCFE" fill-opacity="0.59"/><rect x="15.32" y="35.07" width="0.81" height="1.2" fill="#9CDCFE" fill-opacity="0.55"/><rect x="16.28" y="35.07" width="0.81" height="1.2" fill="#9CDCFE" fill-opacity="0.55"/><rect x="17.24" y="34.97" width="0.81" height="1.6" fill="#9CDCFE" fill-opacity="0.59"/><rect x="18.19" y="35.37" width="0.81" height="0.9" fill="#D4D4D4" fill-opacity="0.30"/><rect x="20.11" y="34.67" width="0.81" height="1.6" fill="#D4D4D4" fill-opacity="0.42"/><rect x="21.07" y="34.57" width="0.81" height="1.7" fill="#569CD6" fill-opacity="0.64"/><rect x="22.02" y="34.57" width="0.81" height="1.7" fill="#569CD6" fill-opacity="0.64"/><rect x="22.98" y="35.07" width="0.81" height="1.2" fill="#569CD6" fill-opacity="0.55"/><rect x="23.94" y="35.07" width="0.81" height="1.2" fill="#569CD6" fill-opacity="0.55"/><rect x="24.90" y="35.37" width="0.81" height="0.9" fill="#D4D4D4" fill-opacity="0.30"/><rect x="25.86" y="35.07" width="0.81" height="1.2" fill="#9CDCFE" fill-opacity="0.55"/><rect x="26.81" y="34.57" width="0.81" height="1.7" fill="#9CDCFE" fill-opacity="0.64"/><rect x="27.77" y="35.07" width="0.81" height="1.2" fill="#9CDCFE" fill-opacity="0.55"/><rect x="28.73" y="34.57" width="0.81" height="1.7" fill="#9CDCFE" fill-opacity="0.64"/><rect x="29.69" y="35.07" width="0.81" height="1.2" fill="#9CDCFE" fill-opacity="0.55"/><rect x="30.64" y="35.37" width="0.81" height="0.9" fill="#D4D4D4" fill-opacity="0.30"/><rect x="31.60" y="34.97" width="0.81" height="1.6" fill="#9CDCFE" fill-opacity="0.59"/><rect x="32.56" y="34.57" width="0.81" height="1.7" fill="#9CDCFE" fill-opacity="0.64"/><rect x="33.52" y="35.07" width="0.81" height="1.2" fill="#9CDCFE" fill-opacity="0.55"/><rect x="34.47" y="34.97" width="0.81" height="1.6" fill="#9CDCFE" fill-opacity="0.59"/><rect x="35.43" y="35.07" width="0.81" height="1.2" fill="#9CDCFE" fill-opacity="0.55"/><rect x="36.39" y="35.07" width="0.81" height="1.2" fill="#9CDCFE" fill-opacity="0.55"/><rect x="37.35" y="34.97" width="0.81" height="1.6" fill="#9CDCFE" fill-opacity="0.59"/><rect x="7.66" y="36.59" width="0.81" height="1.6" fill="#D4D4D4" fill-opacity="0.42"/><rect x="8.62" y="36.59" width="0.81" height="1.6" fill="#D4D4D4" fill-opacity="0.42"/><rect x="9.58" y="37.28" width="0.81" height="0.9" fill="#D4D4D4" fill-opacity="0.30"/><rect x="3.83" y="38.50" width="0.81" height="1.6" fill="#D4D4D4" fill-opacity="0.42"/><rect x="3.83" y="40.82" width="0.81" height="1.2" fill="#DCDCAA" fill-opacity="0.55"/><rect x="4.79" y="40.82" width="0.81" height="1.2" fill="#DCDCAA" fill-opacity="0.55"/><rect x="5.75" y="40.82" width="0.81" height="1.2" fill="#DCDCAA" fill-opacity="0.55"/><rect x="6.70" y="40.32" width="0.81" height="1.7" fill="#DCDCAA" fill-opacity="0.64"/><rect x="7.66" y="40.82" width="0.81" height="1.2" fill="#DCDCAA" fill-opacity="0.55"/><rect x="8.62" y="40.82" width="0.81" height="1.2" fill="#DCDCAA" fill-opacity="0.55"/><rect x="9.58" y="40.42" width="0.81" height="1.6" fill="#D4D4D4" fill-opacity="0.42"/><rect x="10.53" y="40.42" width="0.81" height="1.6" fill="#D4D4D4" fill-opacity="0.42"/><rect x="12.45" y="40.42" width="0.81" height="1.6" fill="#D4D4D4" fill-opacity="0.42"/><rect x="7.66" y="42.73" width="0.81" height="1.2" fill="#C586C0" fill-opacity="0.55"/><rect x="8.62" y="42.73" width="0.81" height="1.2" fill="#C586C0" fill-opacity="0.55"/><rect x="9.58" y="42.23" width="0.81" height="1.7" fill="#C586C0" fill-opacity="0.64"/><rect x="10.53" y="42.73" width="0.81" height="1.2" fill="#C586C0" fill-opacity="0.55"/><rect x="11.49" y="42.73" width="0.81" height="1.2" fill="#C586C0" fill-opacity="0.55"/><rect x="12.45" y="42.73" width="0.81" height="1.2" fill="#C586C0" fill-opacity="0.55"/><rect x="14.36" y="42.33" width="0.81" height="1.6" fill="#D4D4D4" fill-opacity="0.42"/><rect x="11.49" y="44.25" width="0.81" height="1.6" fill="#808080" fill-opacity="0.42"/><rect x="12.45" y="44.15" width="0.81" height="1.7" fill="#569CD6" fill-opacity="0.64"/><rect x="13.41" y="44.65" width="0.81" height="1.2" fill="#569CD6" fill-opacity="0.55"/><rect x="14.36" y="44.15" width="0.81" height="1.7" fill="#569CD6" fill-opacity="0.64"/><rect x="15.32" y="44.15" width="0.81" height="1.7" fill="#569CD6" fill-opacity="0.64"/><rect x="16.28" y="44.65" width="0.81" height="1.2" fill="#569CD6" fill-opacity="0.55"/><rect x="17.24" y="44.65" width="0.81" height="1.2" fill="#569CD6" fill-opacity="0.55"/><rect x="19.15" y="44.65" width="0.81" height="1.2" fill="#9CDCFE" fill-opacity="0.55"/><rect x="20.11" y="44.65" width="0.81" height="1.2" fill="#9CDCFE" fill-opacity="0.55"/><rect x="21.07" y="44.15" width="0.81" height="1.7" fill="#9CDCFE" fill-opacity="0.64"/><rect x="22.02" y="44.15" width="0.81" height="1.7" fill="#9CDCFE" fill-opacity="0.64"/><rect x="22.98" y="44.65" width="0.81" height="1.2" fill="#9CDCFE" fill-opacity="0.55"/><rect x="23.94" y="44.65" width="0.81" height="1.2" fill="#9CDCFE" fill-opacity="0.55"/><rect x="24.90" y="44.15" width="0.81" height="1.7" fill="#9CDCFE" fill-opacity="0.64"/><rect x="25.86" y="44.25" width="0.81" height="1.6" fill="#D4D4D4" fill-opacity="0.42"/><rect x="26.81" y="44.25" width="0.81" height="1.6" fill="#569CD6" fill-opacity="0.42"/><rect x="27.77" y="44.15" width="0.81" height="1.7" fill="#569CD6" fill-opacity="0.64"/><rect x="28.73" y="44.15" width="0.81" height="1.7" fill="#569CD6" fill-opacity="0.64"/><rect x="29.69" y="44.65" width="0.81" height="1.2" fill="#569CD6" fill-opacity="0.55"/><rect x="30.64" y="44.65" width="0.81" height="1.2" fill="#569CD6" fill-opacity="0.55"/><rect x="31.60" y="44.95" width="0.81" height="0.9" fill="#D4D4D4" fill-opacity="0.30"/><rect x="32.56" y="44.15" width="0.81" height="1.7" fill="#9CDCFE" fill-opacity="0.64"/><rect x="33.52" y="44.65" width="0.81" height="1.2" fill="#9CDCFE" fill-opacity="0.55"/><rect x="34.47" y="44.65" width="0.81" height="1.2" fill="#9CDCFE" fill-opacity="0.55"/><rect x="35.43" y="44.15" width="0.81" height="1.7" fill="#9CDCFE" fill-opacity="0.64"/><rect x="36.39" y="44.15" width="0.81" height="1.7" fill="#9CDCFE" fill-opacity="0.64"/><rect x="37.35" y="44.65" width="0.81" height="1.2" fill="#9CDCFE" fill-opacity="0.55"/><rect x="38.30" y="44.15" width="0.81" height="1.7" fill="#9CDCFE" fill-opacity="0.64"/><rect x="39.26" y="44.15" width="0.81" height="1.7" fill="#9CDCFE" fill-opacity="0.64"/><rect x="40.22" y="44.65" width="0.81" height="1.2" fill="#9CDCFE" fill-opacity="0.55"/><rect x="41.18" y="44.65" width="0.81" height="1.2" fill="#9CDCFE" fill-opacity="0.55"/><rect x="42.13" y="44.15" width="0.81" height="1.7" fill="#9CDCFE" fill-opacity="0.64"/><rect x="43.09" y="44.25" width="0.81" height="1.6" fill="#569CD6" fill-opacity="0.42"/><rect x="44.05" y="44.25" width="0.81" height="1.6" fill="#808080" fill-opacity="0.42"/><rect x="15.32" y="46.16" width="0.81" height="1.6" fill="#569CD6" fill-opacity="0.42"/><rect x="16.28" y="46.06" width="0.81" height="1.7" fill="#569CD6" fill-opacity="0.64"/><rect x="17.24" y="46.06" width="0.81" height="1.7" fill="#569CD6" fill-opacity="0.64"/><rect x="18.19" y="46.56" width="0.81" height="1.2" fill="#569CD6" fill-opacity="0.55"/><rect x="19.15" y="46.56" width="0.81" height="1.2" fill="#569CD6" fill-opacity="0.55"/><rect x="20.11" y="46.86" width="0.81" height="0.9" fill="#D4D4D4" fill-opacity="0.30"/><rect x="21.07" y="46.56" width="0.81" height="1.2" fill="#9CDCFE" fill-opacity="0.55"/><rect x="22.02" y="46.06" width="0.81" height="1.7" fill="#9CDCFE" fill-opacity="0.64"/><rect x="22.98" y="46.56" width="0.81" height="1.2" fill="#9CDCFE" fill-opacity="0.55"/><rect x="23.94" y="46.06" width="0.81" height="1.7" fill="#9CDCFE" fill-opacity="0.64"/><rect x="24.90" y="46.56" width="0.81" height="1.2" fill="#9CDCFE" fill-opacity="0.55"/><rect x="25.86" y="46.86" width="0.81" height="0.9" fill="#D4D4D4" fill-opacity="0.30"/><rect x="26.81" y="46.46" width="0.81" height="1.6" fill="#9CDCFE" fill-opacity="0.59"/><rect x="27.77" y="46.06" width="0.81" height="1.7" fill="#9CDCFE" fill-opacity="0.64"/><rect x="28.73" y="46.56" width="0.81" height="1.2" fill="#9CDCFE" fill-opacity="0.55"/><rect x="29.69" y="46.46" width="0.81" height="1.6" fill="#9CDCFE" fill-opacity="0.59"/><rect x="30.64" y="46.56" width="0.81" height="1.2" fill="#9CDCFE" fill-opacity="0.55"/><rect x="31.60" y="46.56" width="0.81" height="1.2" fill="#9CDCFE" fill-opacity="0.55"/><rect x="32.56" y="46.46" width="0.81" height="1.6" fill="#9CDCFE" fill-opacity="0.59"/><rect x="34.47" y="46.16" width="0.81" height="1.6" fill="#D4D4D4" fill-opacity="0.42"/><rect x="36.39" y="46.86" width="0.81" height="0.9" fill="#CE9178" fill-opacity="0.30"/><rect x="37.35" y="46.06" width="0.81" height="1.7" fill="#CE9178" fill-opacity="0.64"/><rect x="38.30" y="46.56" width="0.81" height="1.2" fill="#CE9178" fill-opacity="0.55"/><rect x="39.26" y="46.56" width="0.81" height="1.2" fill="#CE9178" fill-opacity="0.55"/><rect x="40.22" y="46.56" width="0.81" height="1.2" fill="#CE9178" fill-opacity="0.55"/><rect x="41.18" y="46.56" width="0.81" height="1.2" fill="#CE9178" fill-opacity="0.55"/><rect x="42.13" y="46.86" width="0.81" height="0.9" fill="#CE9178" fill-opacity="0.30"/><rect x="44.05" y="46.86" width="0.81" height="0.9" fill="#D4D4D4" fill-opacity="0.30"/><rect x="45.96" y="46.86" width="0.81" height="0.9" fill="#CE9178" fill-opacity="0.30"/><rect x="46.92" y="46.06" width="0.81" height="1.7" fill="#CE9178" fill-opacity="0.64"/><rect x="47.88" y="46.06" width="0.81" height="1.7" fill="#CE9178" fill-opacity="0.64"/><rect x="48.84" y="46.56" width="0.81" height="1.2" fill="#CE9178" fill-opacity="0.55"/><rect x="49.80" y="46.46" width="0.81" height="1.6" fill="#CE9178" fill-opacity="0.59"/><rect x="50.75" y="46.86" width="0.81" height="0.9" fill="#CE9178" fill-opacity="0.30"/><rect x="51.71" y="46.16" width="0.81" height="1.6" fill="#569CD6" fill-opacity="0.42"/><rect x="11.49" y="48.08" width="0.81" height="1.6" fill="#808080" fill-opacity="0.42"/><rect x="12.45" y="48.48" width="0.81" height="1.2" fill="#808080" fill-opacity="0.55"/><rect x="13.41" y="47.98" width="0.81" height="1.7" fill="#569CD6" fill-opacity="0.64"/><rect x="14.36" y="48.48" width="0.81" height="1.2" fill="#569CD6" fill-opacity="0.55"/><rect x="15.32" y="47.98" width="0.81" height="1.7" fill="#569CD6" fill-opacity="0.64"/><rect x="16.28" y="47.98" width="0.81" height="1.7" fill="#569CD6" fill-opacity="0.64"/><rect x="17.24" y="48.48" width="0.81" height="1.2" fill="#569CD6" fill-opacity="0.55"/><rect x="18.19" y="48.48" width="0.81" height="1.2" fill="#569CD6" fill-opacity="0.55"/><rect x="19.15" y="48.08" width="0.81" height="1.6" fill="#808080" fill-opacity="0.42"/><rect x="7.66" y="49.99" width="0.81" height="1.6" fill="#D4D4D4" fill-opacity="0.42"/><rect x="8.62" y="50.69" width="0.81" height="0.9" fill="#D4D4D4" fill-opacity="0.30"/><rect x="3.83" y="51.91" width="0.81" height="1.6" fill="#D4D4D4" fill-opacity="0.42"/><rect x="0.00" y="53.82" width="0.81" height="1.6" fill="#D4D4D4" fill-opacity="0.42"/></svg>
<div class="a" style="left:1364.3px;top:33.5px;width:1.5px;height:807.4px;background:#191919"></div>
<div class="a" style="left:1365.8px;top:33.5px;width:13.2px;height:504.8px;background:#464646"></div>
<div class="a" style="left:1370.1px;top:55px;width:5px;height:10.8px;background:#9b9b9b"></div>
<div class="a" style="left:1365.8px;top:334.5px;width:13.2px;height:1.7px;background:#9b9b9b"></div>
<div class="a" style="left:1370.1px;top:336px;width:5px;height:10px;background:#9b9b9b"></div>
<div class="a" style="left:0;top:840.9px;width:1379px;height:21.1px;background:#167bc8"></div>
<svg class="a" style="left:13.5px;top:844.5px" width="11" height="14" viewBox="0 0 11 14"><g fill="none" stroke="#fff" stroke-width="1.1"><circle cx="2.8" cy="2.1" r="1.45"/><circle cx="7.9" cy="4.0" r="1.45"/><circle cx="2.9" cy="11.0" r="1.45"/></g><g fill="none" stroke="#fff" stroke-width="1.6"><path d="M2.8 3.5 V9.6"/><path d="M7.9 5.4 C7.9 8 5.2 8.7 2.9 8.9"/></g></svg>
<div class="a ui" style="left:26.00px;top:840.9px;font-size:12.2px;line-height:21px;color:#ffffff;-webkit-text-stroke:0.3px #ffffff">master*</div>
<svg class="a" style="left:82.8px;top:845.3px" width="11.5" height="12" viewBox="0 0 11.5 12"><g fill="none" stroke="#fff" stroke-width="1.4"><path d="M1.5 6.5 A4.3 4.3 0 0 1 9.3 3.2"/><path d="M10 5.5 A4.3 4.3 0 0 1 2.2 8.8"/></g><path d="M7.2 1.2 L10.6 1.2 L10.6 4.6 Z" fill="#fff"/><path d="M4.3 10.8 L0.9 10.8 L0.9 7.4 Z" fill="#fff"/></svg>
<svg class="a" style="left:105.3px;top:845.6px" width="11" height="11" viewBox="0 0 11 11"><circle cx="5.5" cy="5.5" r="5.3" fill="#fff"/><path d="M3.3 3.3 L7.7 7.7 M7.7 3.3 L3.3 7.7" stroke="#167bc8" stroke-width="1.6"/></svg>
<div class="a ui" style="left:119.80px;top:840.9px;font-size:12.2px;line-height:21px;color:#ffffff;-webkit-text-stroke:0.3px #ffffff">0</div>
<svg class="a" style="left:132.5px;top:845.3px" width="11" height="11" viewBox="0 0 11 11"><path d="M5.5 0.3 L10.8 10.6 L0.2 10.6 Z" fill="#fff"/><rect x="4.8" y="3.8" width="1.4" height="3.8" fill="#167bc8"/><rect x="4.8" y="8.3" width="1.4" height="1.3" fill="#167bc8"/></svg>
<div class="a ui" style="left:145.80px;top:840.9px;font-size:12.2px;line-height:21px;color:#ffffff;-webkit-text-stroke:0.3px #ffffff">0</div>
<div class="a ui" style="left:948.50px;top:840.9px;font-size:12.2px;line-height:21px;color:#ffffff;-webkit-text-stroke:0.3px #ffffff">Ln 29, Col 2</div>
<div class="a ui" style="left:1028.30px;top:840.9px;font-size:12.2px;line-height:21px;color:#ffffff;-webkit-text-stroke:0.3px #ffffff">Spaces: 4</div>
<div class="a ui" style="left:1096.80px;top:840.9px;font-size:12.2px;line-height:21px;color:#ffffff;-webkit-text-stroke:0.3px #ffffff">UTF-8</div>
<div class="a ui" style="left:1146.60px;top:840.9px;font-size:12.2px;line-height:21px;color:#ffffff;-webkit-text-stroke:0.3px #ffffff">LF</div>
<div class="a ui" style="left:1174.40px;top:840.9px;font-size:12.2px;line-height:21px;color:#ffffff;-webkit-text-stroke:0.3px #ffffff">TypeScript React</div>
<div class="a ui" style="left:1282.20px;top:840.9px;font-size:12.2px;line-height:21px;color:#ffffff;-webkit-text-stroke:0.3px #ffffff">3.0.1</div>
<svg class="a" style="left:1323.8px;top:844.5px" width="14" height="14" viewBox="0 0 14 14"><circle cx="7" cy="7" r="6.8" fill="#fff"/><circle cx="4.8" cy="5.2" r="1.1" fill="#167bc8"/><circle cx="9.2" cy="5.2" r="1.1" fill="#167bc8"/><path d="M3.6 8 Q7 11.8 10.4 8" fill="none" stroke="#167bc8" stroke-width="1.3"/></svg>
<svg class="a" style="left:1352.5px;top:844.5px" width="13.5" height="14" viewBox="0 0 13.5 14"><path d="M6.75 0.6 C4 0.6 2.4 2.8 2.4 5.5 V8.8 L0.8 11 H12.7 L11.1 8.8 V5.5 C11.1 2.8 9.5 0.6 6.75 0.6 Z" fill="#fff"/><path d="M5 12 A1.8 1.8 0 0 0 8.5 12 Z" fill="#fff"/></svg>
<svg class="a" style="left:13px;top:11px" width="23" height="25" viewBox="0 0 23 25"><path d="M7 1.8 H15.5 L20.8 7 V19.5" fill="none" stroke="#fff" stroke-width="1.7"/><path d="M15.5 1.8 L20.8 7 H15.5 Z" fill="#fff"/><path d="M2.6 6.3 H12 L16.7 11 V23.3 H2.6 Z" fill="none" stroke="#fff" stroke-width="1.9"/><path d="M11.5 6.3 L16.7 11.5 H11.5 Z" fill="#fff"/></svg>
<svg class="a" style="left:12px;top:58px" width="25" height="26" viewBox="0 0 25 26"><circle cx="15" cy="11" r="7.3" fill="none" stroke="#adadad" stroke-width="2.3"/><path d="M9.6 16.6 L3 23.3" stroke="#adadad" stroke-width="2.6" stroke-linecap="round"/></svg>
<svg class="a" style="left:13px;top:104px" width="22" height="30" viewBox="0 0 22 30"><g fill="none" stroke="#adadad"><circle cx="6.3" cy="6.9" r="2.8" stroke-width="1.9"/><circle cx="16.9" cy="6.9" r="2.8" stroke-width="1.9"/><circle cx="9.5" cy="24.3" r="2.8" stroke-width="1.9"/><path d="M6.3 9.6 V11.5 L11.2 16.6 L16.9 11.5 V9.6" stroke-width="2.6" stroke-linejoin="round"/><path d="M11.2 16.6 L9.8 21.5" stroke-width="2.4"/></g></svg>
<div class="a" style="left:23.4px;top:120.2px;width:16.8px;height:16.8px;border-radius:50%;background:#167bc8"></div>
<div class="a ui" style="left:23.4px;top:120.2px;width:16.8px;height:16.8px;text-align:center;font-size:11.5px;line-height:16.8px;font-weight:normal;color:#fff">7</div>
<svg class="a" style="left:9px;top:152px" width="30" height="32" viewBox="0 0 30 32"><g fill="#adadad"><ellipse cx="11.8" cy="19.2" rx="3.4" ry="3.2"/><ellipse cx="17.9" cy="12.6" rx="3.2" ry="2.9"/></g><g stroke="#adadad" stroke-width="1.8" fill="none"><path d="M5.3 17.4 V15.7 H10.6"/><path d="M13.2 21.5 Q15 23.3 15.3 25.6"/><path d="M12.6 7.2 L14.2 11.2"/><path d="M19.3 8 V10.2"/><path d="M19.8 16.7 H23.6 V18.6"/><path d="M20.8 11.4 H23"/></g><path d="M6.3 7.4 L23.8 23.8" stroke="#333333" stroke-width="4.4"/><path d="M6.3 7.4 L23.8 23.8" stroke="#adadad" stroke-width="2.4"/><circle cx="15.2" cy="15.85" r="12.1" fill="none" stroke="#adadad" stroke-width="2.5"/></svg>
<svg class="a" style="left:14.7px;top:205.9px" width="20.2" height="20.2" viewBox="0 0 20.2 20.2"><rect x="0" y="0" width="20.2" height="20.2" fill="#adadad"/><g fill="#333333"><rect x="8.45" y="0" width="1.8" height="4.6"/><rect x="4.5" y="4.4" width="10.6" height="11.3"/><rect x="15" y="10.1" width="5.2" height="1.5"/><rect x="9.95" y="15.6" width="1.4" height="4.6"/><rect x="13.3" y="3.2" width="3.7" height="3.6"/></g><rect x="5.4" y="5.9" width="8.9" height="8.7" fill="#adadad"/></svg>
<svg class="a" style="left:14px;top:806.5px" width="20.5" height="20.5" viewBox="-10.25 -10.25 20.5 20.5"><g fill="#b0b0b0"><rect x="-1.55" y="-9.3" width="3.1" height="5" rx="0.8" transform="rotate(0)"/><rect x="-1.55" y="-9.3" width="3.1" height="5" rx="0.8" transform="rotate(45)"/><rect x="-1.55" y="-9.3" width="3.1" height="5" rx="0.8" transform="rotate(90)"/><rect x="-1.55" y="-9.3" width="3.1" height="5" rx="0.8" transform="rotate(135)"/><rect x="-1.55" y="-9.3" width="3.1" height="5" rx="0.8" transform="rotate(180)"/><rect x="-1.55" y="-9.3" width="3.1" height="5" rx="0.8" transform="rotate(225)"/><rect x="-1.55" y="-9.3" width="3.1" height="5" rx="0.8" transform="rotate(270)"/><rect x="-1.55" y="-9.3" width="3.1" height="5" rx="0.8" transform="rotate(315)"/><circle r="6.7"/></g><circle r="2.8" fill="#333"/></svg>
</body></html>
